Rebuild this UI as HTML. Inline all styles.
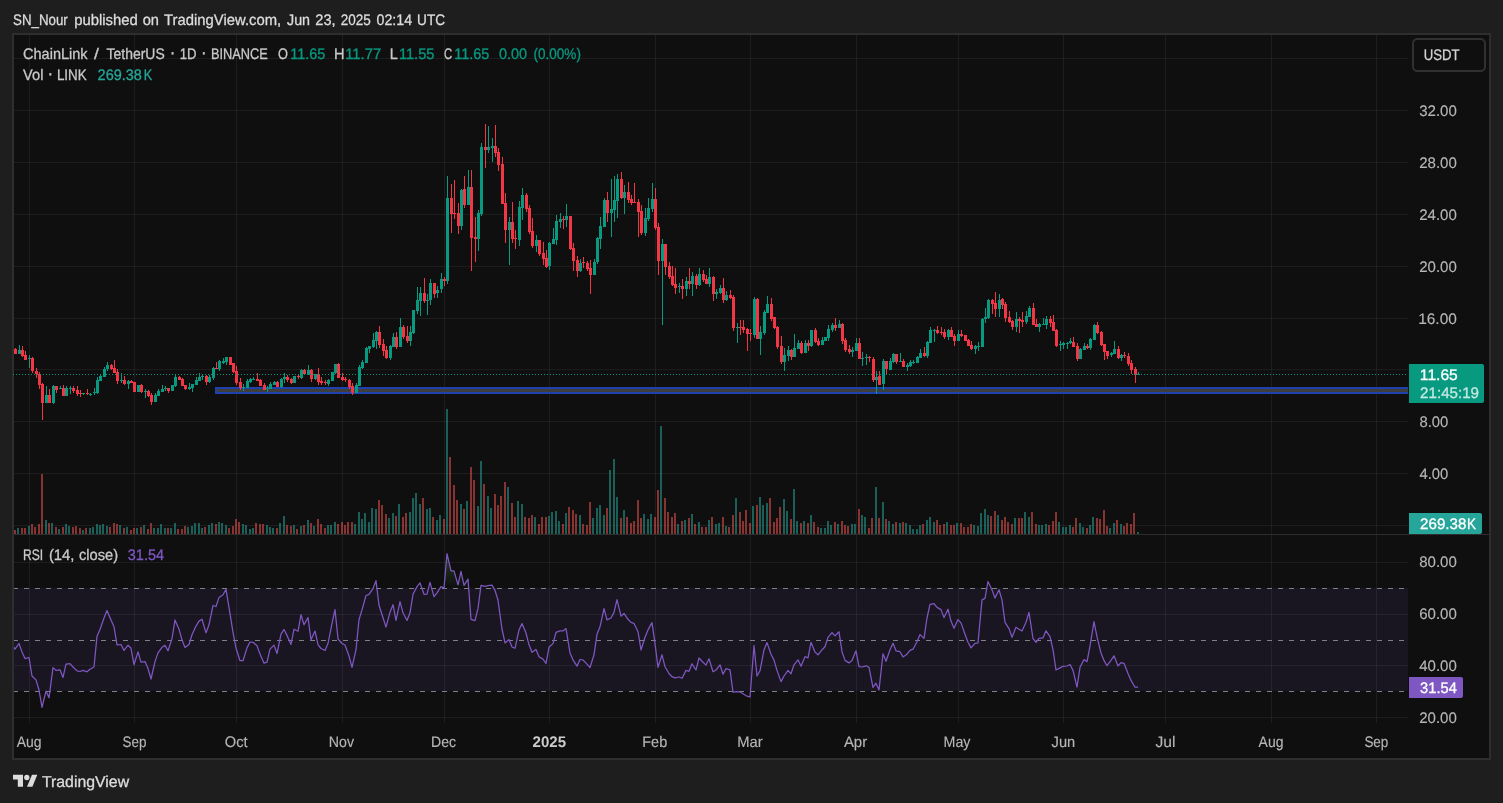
<!DOCTYPE html>
<html lang="en">
<head>
<meta charset="utf-8">
<title>LINKUSDT chart by SN_Nour</title>
<style>
html,body{margin:0;padding:0;background:#1e1e1e;overflow:hidden}
body{width:1503px;height:803px;font-family:"Liberation Sans","DejaVu Sans",sans-serif}
svg{display:block;will-change:transform}
text{font-family:"Liberation Sans","DejaVu Sans",sans-serif;font-size:15px;fill:#c9c9c9;text-rendering:geometricPrecision}
.hdr{font-size:15.5px;fill:#dcdcdc}
.ax{fill:#bdbdbd}
.lg{fill:#c9c9c9}
.gv{fill:#089981}
.vv{fill:#26a69a}
.pv{fill:#7e57c2}
.w{fill:#ffffff}
.grid{stroke:#ffffff;stroke-opacity:0.06;stroke-width:1;shape-rendering:crispEdges}
.crisp{shape-rendering:crispEdges}
</style>
</head>
<body>
<svg width="1503" height="803" viewBox="0 0 1503 803">
<rect x="0" y="0" width="1503" height="803" fill="#1e1e1e"/>
<!-- frame -->
<rect class="crisp" x="12" y="33" width="1479" height="727" fill="#2e2e2e"/>
<rect class="crisp" x="14" y="35" width="1475" height="723" fill="#0f0f0f"/>
<!-- RSI band -->
<rect class="crisp" x="14" y="588" width="1394" height="103" fill="#1a1621"/>
<!-- grid -->
<g class="grid">
<path d="M29.5 35V723M134.5 35V723M236.5 35V723M342.5 35V723M444.5 35V723M549.5 35V723M655.5 35V723M750.5 35V723M856.5 35V723M958.5 35V723M1063.5 35V723M1165.5 35V723M1271.5 35V723M1376.5 35V723"/>
<path d="M14 58.5H1408M14 110.5H1408M14 162.5H1408M14 214.5H1408M14 266.5H1408M14 318.5H1408M14 369.5H1408M14 421.5H1408M14 473.5H1408M14 525.5H1408"/>
<path d="M14 562.5H1408M14 614.5H1408M14 665.5H1408M14 717.5H1408"/>
</g>
<!-- volume -->
<g class="crisp" fill-opacity="0.53">
<rect x="14" y="530" width="2" height="4" fill="#ef5350"/>
<rect x="17" y="528" width="2" height="6" fill="#26a69a"/>
<rect x="21" y="528" width="2" height="6" fill="#ef5350"/>
<rect x="24" y="528" width="2" height="6" fill="#ef5350"/>
<rect x="28" y="526" width="2" height="8" fill="#26a69a"/>
<rect x="31" y="524" width="2" height="10" fill="#ef5350"/>
<rect x="34" y="527" width="2" height="7" fill="#ef5350"/>
<rect x="38" y="524" width="2" height="10" fill="#ef5350"/>
<rect x="41" y="474" width="2" height="60" fill="#ef5350"/>
<rect x="45" y="520" width="2" height="14" fill="#26a69a"/>
<rect x="48" y="523" width="2" height="11" fill="#ef5350"/>
<rect x="51" y="523" width="2" height="11" fill="#26a69a"/>
<rect x="55" y="527" width="2" height="7" fill="#ef5350"/>
<rect x="58" y="529" width="2" height="5" fill="#26a69a"/>
<rect x="62" y="527" width="2" height="7" fill="#ef5350"/>
<rect x="65" y="524" width="2" height="10" fill="#26a69a"/>
<rect x="68" y="526" width="2" height="8" fill="#26a69a"/>
<rect x="72" y="527" width="2" height="7" fill="#ef5350"/>
<rect x="75" y="526" width="2" height="8" fill="#ef5350"/>
<rect x="79" y="528" width="2" height="6" fill="#ef5350"/>
<rect x="82" y="530" width="2" height="4" fill="#26a69a"/>
<rect x="85" y="528" width="2" height="6" fill="#ef5350"/>
<rect x="89" y="528" width="2" height="6" fill="#26a69a"/>
<rect x="92" y="527" width="2" height="7" fill="#26a69a"/>
<rect x="96" y="524" width="2" height="10" fill="#26a69a"/>
<rect x="99" y="525" width="2" height="9" fill="#26a69a"/>
<rect x="102" y="524" width="2" height="10" fill="#26a69a"/>
<rect x="106" y="526" width="2" height="8" fill="#26a69a"/>
<rect x="109" y="527" width="2" height="7" fill="#ef5350"/>
<rect x="113" y="523" width="2" height="11" fill="#ef5350"/>
<rect x="116" y="524" width="2" height="10" fill="#ef5350"/>
<rect x="119" y="525" width="2" height="9" fill="#26a69a"/>
<rect x="123" y="528" width="2" height="6" fill="#ef5350"/>
<rect x="126" y="527" width="2" height="7" fill="#26a69a"/>
<rect x="130" y="530" width="2" height="4" fill="#ef5350"/>
<rect x="133" y="528" width="2" height="6" fill="#ef5350"/>
<rect x="136" y="528" width="2" height="6" fill="#26a69a"/>
<rect x="140" y="527" width="2" height="7" fill="#ef5350"/>
<rect x="143" y="525" width="2" height="9" fill="#26a69a"/>
<rect x="147" y="529" width="2" height="5" fill="#ef5350"/>
<rect x="150" y="523" width="2" height="11" fill="#ef5350"/>
<rect x="153" y="528" width="2" height="6" fill="#26a69a"/>
<rect x="157" y="528" width="2" height="6" fill="#26a69a"/>
<rect x="160" y="524" width="2" height="10" fill="#26a69a"/>
<rect x="164" y="528" width="2" height="6" fill="#26a69a"/>
<rect x="167" y="528" width="2" height="6" fill="#ef5350"/>
<rect x="170" y="528" width="2" height="6" fill="#26a69a"/>
<rect x="174" y="523" width="2" height="11" fill="#26a69a"/>
<rect x="177" y="529" width="2" height="5" fill="#ef5350"/>
<rect x="181" y="529" width="2" height="5" fill="#ef5350"/>
<rect x="184" y="526" width="2" height="8" fill="#ef5350"/>
<rect x="187" y="527" width="2" height="7" fill="#26a69a"/>
<rect x="191" y="526" width="2" height="8" fill="#26a69a"/>
<rect x="194" y="523" width="2" height="11" fill="#26a69a"/>
<rect x="198" y="523" width="2" height="11" fill="#26a69a"/>
<rect x="201" y="528" width="2" height="6" fill="#26a69a"/>
<rect x="204" y="527" width="2" height="7" fill="#ef5350"/>
<rect x="208" y="525" width="2" height="9" fill="#26a69a"/>
<rect x="211" y="523" width="2" height="11" fill="#26a69a"/>
<rect x="215" y="524" width="2" height="10" fill="#ef5350"/>
<rect x="218" y="522" width="2" height="12" fill="#26a69a"/>
<rect x="221" y="523" width="2" height="11" fill="#26a69a"/>
<rect x="225" y="525" width="2" height="9" fill="#26a69a"/>
<rect x="228" y="528" width="2" height="6" fill="#ef5350"/>
<rect x="232" y="526" width="2" height="8" fill="#ef5350"/>
<rect x="235" y="519" width="2" height="15" fill="#ef5350"/>
<rect x="238" y="522" width="2" height="12" fill="#ef5350"/>
<rect x="242" y="524" width="2" height="10" fill="#26a69a"/>
<rect x="245" y="525" width="2" height="9" fill="#26a69a"/>
<rect x="249" y="529" width="2" height="5" fill="#26a69a"/>
<rect x="252" y="528" width="2" height="6" fill="#26a69a"/>
<rect x="255" y="523" width="2" height="11" fill="#ef5350"/>
<rect x="259" y="524" width="2" height="10" fill="#ef5350"/>
<rect x="262" y="524" width="2" height="10" fill="#ef5350"/>
<rect x="266" y="525" width="2" height="9" fill="#26a69a"/>
<rect x="269" y="527" width="2" height="7" fill="#26a69a"/>
<rect x="272" y="528" width="2" height="6" fill="#26a69a"/>
<rect x="276" y="528" width="2" height="6" fill="#ef5350"/>
<rect x="279" y="523" width="2" height="11" fill="#26a69a"/>
<rect x="283" y="516" width="2" height="18" fill="#26a69a"/>
<rect x="286" y="525" width="2" height="9" fill="#ef5350"/>
<rect x="290" y="526" width="2" height="8" fill="#ef5350"/>
<rect x="293" y="525" width="2" height="9" fill="#26a69a"/>
<rect x="296" y="529" width="2" height="5" fill="#ef5350"/>
<rect x="300" y="526" width="2" height="8" fill="#26a69a"/>
<rect x="303" y="525" width="2" height="9" fill="#ef5350"/>
<rect x="307" y="520" width="2" height="14" fill="#26a69a"/>
<rect x="310" y="523" width="2" height="11" fill="#ef5350"/>
<rect x="313" y="526" width="2" height="8" fill="#26a69a"/>
<rect x="317" y="519" width="2" height="15" fill="#ef5350"/>
<rect x="320" y="524" width="2" height="10" fill="#ef5350"/>
<rect x="324" y="528" width="2" height="6" fill="#ef5350"/>
<rect x="327" y="525" width="2" height="9" fill="#26a69a"/>
<rect x="330" y="525" width="2" height="9" fill="#26a69a"/>
<rect x="334" y="522" width="2" height="12" fill="#26a69a"/>
<rect x="337" y="524" width="2" height="10" fill="#ef5350"/>
<rect x="341" y="522" width="2" height="12" fill="#ef5350"/>
<rect x="344" y="525" width="2" height="9" fill="#ef5350"/>
<rect x="347" y="522" width="2" height="12" fill="#ef5350"/>
<rect x="351" y="522" width="2" height="12" fill="#ef5350"/>
<rect x="354" y="524" width="2" height="10" fill="#26a69a"/>
<rect x="358" y="512" width="2" height="22" fill="#26a69a"/>
<rect x="361" y="519" width="2" height="15" fill="#26a69a"/>
<rect x="364" y="513" width="2" height="21" fill="#26a69a"/>
<rect x="368" y="522" width="2" height="12" fill="#26a69a"/>
<rect x="371" y="508" width="2" height="26" fill="#26a69a"/>
<rect x="375" y="509" width="2" height="25" fill="#26a69a"/>
<rect x="378" y="500" width="2" height="34" fill="#ef5350"/>
<rect x="381" y="505" width="2" height="29" fill="#ef5350"/>
<rect x="385" y="514" width="2" height="20" fill="#ef5350"/>
<rect x="388" y="518" width="2" height="16" fill="#26a69a"/>
<rect x="392" y="513" width="2" height="21" fill="#26a69a"/>
<rect x="395" y="516" width="2" height="18" fill="#ef5350"/>
<rect x="398" y="504" width="2" height="30" fill="#26a69a"/>
<rect x="402" y="517" width="2" height="17" fill="#ef5350"/>
<rect x="405" y="513" width="2" height="21" fill="#ef5350"/>
<rect x="409" y="512" width="2" height="22" fill="#26a69a"/>
<rect x="412" y="498" width="2" height="36" fill="#26a69a"/>
<rect x="415" y="493" width="2" height="41" fill="#26a69a"/>
<rect x="419" y="504" width="2" height="30" fill="#26a69a"/>
<rect x="422" y="498" width="2" height="36" fill="#ef5350"/>
<rect x="426" y="509" width="2" height="25" fill="#26a69a"/>
<rect x="429" y="508" width="2" height="26" fill="#26a69a"/>
<rect x="432" y="517" width="2" height="17" fill="#ef5350"/>
<rect x="436" y="520" width="2" height="14" fill="#26a69a"/>
<rect x="439" y="515" width="2" height="19" fill="#26a69a"/>
<rect x="443" y="519" width="2" height="15" fill="#ef5350"/>
<rect x="446" y="409" width="2" height="125" fill="#26a69a"/>
<rect x="449" y="457" width="2" height="77" fill="#ef5350"/>
<rect x="453" y="485" width="2" height="49" fill="#ef5350"/>
<rect x="456" y="500" width="2" height="34" fill="#ef5350"/>
<rect x="460" y="504" width="2" height="30" fill="#26a69a"/>
<rect x="463" y="509" width="2" height="25" fill="#ef5350"/>
<rect x="466" y="501" width="2" height="33" fill="#26a69a"/>
<rect x="470" y="467" width="2" height="67" fill="#ef5350"/>
<rect x="473" y="480" width="2" height="54" fill="#ef5350"/>
<rect x="477" y="506" width="2" height="28" fill="#26a69a"/>
<rect x="480" y="461" width="2" height="73" fill="#26a69a"/>
<rect x="483" y="484" width="2" height="50" fill="#ef5350"/>
<rect x="487" y="496" width="2" height="38" fill="#26a69a"/>
<rect x="490" y="508" width="2" height="26" fill="#26a69a"/>
<rect x="494" y="494" width="2" height="40" fill="#ef5350"/>
<rect x="497" y="505" width="2" height="29" fill="#ef5350"/>
<rect x="500" y="496" width="2" height="38" fill="#ef5350"/>
<rect x="504" y="482" width="2" height="52" fill="#ef5350"/>
<rect x="507" y="487" width="2" height="47" fill="#26a69a"/>
<rect x="511" y="503" width="2" height="31" fill="#ef5350"/>
<rect x="514" y="517" width="2" height="17" fill="#ef5350"/>
<rect x="517" y="501" width="2" height="33" fill="#26a69a"/>
<rect x="521" y="504" width="2" height="30" fill="#26a69a"/>
<rect x="524" y="517" width="2" height="17" fill="#ef5350"/>
<rect x="528" y="518" width="2" height="16" fill="#ef5350"/>
<rect x="531" y="515" width="2" height="19" fill="#ef5350"/>
<rect x="534" y="517" width="2" height="17" fill="#26a69a"/>
<rect x="538" y="524" width="2" height="10" fill="#ef5350"/>
<rect x="541" y="517" width="2" height="17" fill="#ef5350"/>
<rect x="545" y="517" width="2" height="17" fill="#ef5350"/>
<rect x="548" y="516" width="2" height="18" fill="#26a69a"/>
<rect x="551" y="512" width="2" height="22" fill="#26a69a"/>
<rect x="555" y="511" width="2" height="23" fill="#26a69a"/>
<rect x="558" y="521" width="2" height="13" fill="#26a69a"/>
<rect x="562" y="524" width="2" height="10" fill="#ef5350"/>
<rect x="565" y="513" width="2" height="21" fill="#26a69a"/>
<rect x="568" y="507" width="2" height="27" fill="#ef5350"/>
<rect x="572" y="510" width="2" height="24" fill="#ef5350"/>
<rect x="575" y="514" width="2" height="20" fill="#ef5350"/>
<rect x="579" y="515" width="2" height="19" fill="#26a69a"/>
<rect x="582" y="524" width="2" height="10" fill="#ef5350"/>
<rect x="586" y="525" width="2" height="9" fill="#ef5350"/>
<rect x="589" y="502" width="2" height="32" fill="#ef5350"/>
<rect x="592" y="518" width="2" height="16" fill="#26a69a"/>
<rect x="596" y="508" width="2" height="26" fill="#26a69a"/>
<rect x="599" y="505" width="2" height="29" fill="#26a69a"/>
<rect x="603" y="515" width="2" height="19" fill="#26a69a"/>
<rect x="606" y="508" width="2" height="26" fill="#ef5350"/>
<rect x="609" y="470" width="2" height="64" fill="#26a69a"/>
<rect x="613" y="459" width="2" height="75" fill="#26a69a"/>
<rect x="616" y="497" width="2" height="37" fill="#26a69a"/>
<rect x="620" y="518" width="2" height="16" fill="#ef5350"/>
<rect x="623" y="510" width="2" height="24" fill="#26a69a"/>
<rect x="626" y="517" width="2" height="17" fill="#ef5350"/>
<rect x="630" y="523" width="2" height="11" fill="#ef5350"/>
<rect x="633" y="521" width="2" height="13" fill="#ef5350"/>
<rect x="637" y="500" width="2" height="34" fill="#ef5350"/>
<rect x="640" y="518" width="2" height="16" fill="#ef5350"/>
<rect x="643" y="514" width="2" height="20" fill="#26a69a"/>
<rect x="647" y="519" width="2" height="15" fill="#26a69a"/>
<rect x="650" y="514" width="2" height="20" fill="#26a69a"/>
<rect x="654" y="517" width="2" height="17" fill="#ef5350"/>
<rect x="657" y="490" width="2" height="44" fill="#ef5350"/>
<rect x="660" y="426" width="2" height="108" fill="#26a69a"/>
<rect x="664" y="498" width="2" height="36" fill="#ef5350"/>
<rect x="667" y="512" width="2" height="22" fill="#ef5350"/>
<rect x="671" y="517" width="2" height="17" fill="#ef5350"/>
<rect x="674" y="513" width="2" height="21" fill="#ef5350"/>
<rect x="677" y="524" width="2" height="10" fill="#26a69a"/>
<rect x="681" y="521" width="2" height="13" fill="#ef5350"/>
<rect x="684" y="520" width="2" height="14" fill="#26a69a"/>
<rect x="688" y="518" width="2" height="16" fill="#ef5350"/>
<rect x="691" y="514" width="2" height="20" fill="#26a69a"/>
<rect x="694" y="524" width="2" height="10" fill="#ef5350"/>
<rect x="698" y="522" width="2" height="12" fill="#26a69a"/>
<rect x="701" y="527" width="2" height="7" fill="#ef5350"/>
<rect x="705" y="527" width="2" height="7" fill="#ef5350"/>
<rect x="708" y="520" width="2" height="14" fill="#26a69a"/>
<rect x="711" y="517" width="2" height="17" fill="#ef5350"/>
<rect x="715" y="524" width="2" height="10" fill="#26a69a"/>
<rect x="718" y="523" width="2" height="11" fill="#26a69a"/>
<rect x="722" y="517" width="2" height="17" fill="#ef5350"/>
<rect x="725" y="526" width="2" height="8" fill="#26a69a"/>
<rect x="728" y="527" width="2" height="7" fill="#ef5350"/>
<rect x="732" y="515" width="2" height="19" fill="#ef5350"/>
<rect x="735" y="498" width="2" height="36" fill="#26a69a"/>
<rect x="739" y="512" width="2" height="22" fill="#ef5350"/>
<rect x="742" y="521" width="2" height="13" fill="#ef5350"/>
<rect x="745" y="510" width="2" height="24" fill="#ef5350"/>
<rect x="749" y="523" width="2" height="11" fill="#ef5350"/>
<rect x="752" y="506" width="2" height="28" fill="#26a69a"/>
<rect x="756" y="505" width="2" height="29" fill="#ef5350"/>
<rect x="759" y="497" width="2" height="37" fill="#26a69a"/>
<rect x="762" y="505" width="2" height="29" fill="#26a69a"/>
<rect x="766" y="503" width="2" height="31" fill="#26a69a"/>
<rect x="769" y="498" width="2" height="36" fill="#ef5350"/>
<rect x="773" y="522" width="2" height="12" fill="#ef5350"/>
<rect x="776" y="518" width="2" height="16" fill="#ef5350"/>
<rect x="779" y="507" width="2" height="27" fill="#ef5350"/>
<rect x="783" y="499" width="2" height="35" fill="#26a69a"/>
<rect x="786" y="511" width="2" height="23" fill="#26a69a"/>
<rect x="790" y="519" width="2" height="15" fill="#ef5350"/>
<rect x="793" y="489" width="2" height="45" fill="#26a69a"/>
<rect x="796" y="521" width="2" height="13" fill="#26a69a"/>
<rect x="800" y="523" width="2" height="11" fill="#ef5350"/>
<rect x="803" y="521" width="2" height="13" fill="#26a69a"/>
<rect x="807" y="523" width="2" height="11" fill="#ef5350"/>
<rect x="810" y="515" width="2" height="19" fill="#26a69a"/>
<rect x="813" y="522" width="2" height="12" fill="#ef5350"/>
<rect x="817" y="527" width="2" height="7" fill="#ef5350"/>
<rect x="820" y="528" width="2" height="6" fill="#26a69a"/>
<rect x="824" y="528" width="2" height="6" fill="#26a69a"/>
<rect x="827" y="521" width="2" height="13" fill="#26a69a"/>
<rect x="830" y="525" width="2" height="9" fill="#26a69a"/>
<rect x="834" y="522" width="2" height="12" fill="#ef5350"/>
<rect x="837" y="524" width="2" height="10" fill="#26a69a"/>
<rect x="841" y="521" width="2" height="13" fill="#ef5350"/>
<rect x="844" y="525" width="2" height="9" fill="#ef5350"/>
<rect x="847" y="526" width="2" height="8" fill="#ef5350"/>
<rect x="851" y="524" width="2" height="10" fill="#26a69a"/>
<rect x="854" y="524" width="2" height="10" fill="#26a69a"/>
<rect x="858" y="509" width="2" height="25" fill="#ef5350"/>
<rect x="861" y="515" width="2" height="19" fill="#26a69a"/>
<rect x="864" y="517" width="2" height="17" fill="#26a69a"/>
<rect x="868" y="528" width="2" height="6" fill="#ef5350"/>
<rect x="871" y="518" width="2" height="16" fill="#ef5350"/>
<rect x="875" y="487" width="2" height="47" fill="#26a69a"/>
<rect x="878" y="518" width="2" height="16" fill="#ef5350"/>
<rect x="882" y="502" width="2" height="32" fill="#26a69a"/>
<rect x="885" y="519" width="2" height="15" fill="#ef5350"/>
<rect x="888" y="521" width="2" height="13" fill="#26a69a"/>
<rect x="892" y="524" width="2" height="10" fill="#26a69a"/>
<rect x="895" y="522" width="2" height="12" fill="#ef5350"/>
<rect x="899" y="523" width="2" height="11" fill="#26a69a"/>
<rect x="902" y="522" width="2" height="12" fill="#ef5350"/>
<rect x="905" y="523" width="2" height="11" fill="#26a69a"/>
<rect x="909" y="525" width="2" height="9" fill="#26a69a"/>
<rect x="912" y="529" width="2" height="5" fill="#26a69a"/>
<rect x="916" y="529" width="2" height="5" fill="#26a69a"/>
<rect x="919" y="525" width="2" height="9" fill="#26a69a"/>
<rect x="922" y="524" width="2" height="10" fill="#ef5350"/>
<rect x="926" y="520" width="2" height="14" fill="#26a69a"/>
<rect x="929" y="517" width="2" height="17" fill="#26a69a"/>
<rect x="933" y="522" width="2" height="12" fill="#26a69a"/>
<rect x="936" y="520" width="2" height="14" fill="#ef5350"/>
<rect x="939" y="525" width="2" height="9" fill="#ef5350"/>
<rect x="943" y="524" width="2" height="10" fill="#ef5350"/>
<rect x="946" y="522" width="2" height="12" fill="#26a69a"/>
<rect x="950" y="525" width="2" height="9" fill="#ef5350"/>
<rect x="953" y="525" width="2" height="9" fill="#ef5350"/>
<rect x="956" y="523" width="2" height="11" fill="#26a69a"/>
<rect x="960" y="523" width="2" height="11" fill="#ef5350"/>
<rect x="963" y="527" width="2" height="7" fill="#ef5350"/>
<rect x="967" y="527" width="2" height="7" fill="#ef5350"/>
<rect x="970" y="524" width="2" height="10" fill="#ef5350"/>
<rect x="973" y="525" width="2" height="9" fill="#26a69a"/>
<rect x="977" y="526" width="2" height="8" fill="#26a69a"/>
<rect x="980" y="513" width="2" height="21" fill="#26a69a"/>
<rect x="984" y="509" width="2" height="25" fill="#26a69a"/>
<rect x="987" y="515" width="2" height="19" fill="#26a69a"/>
<rect x="990" y="516" width="2" height="18" fill="#ef5350"/>
<rect x="994" y="511" width="2" height="23" fill="#ef5350"/>
<rect x="997" y="515" width="2" height="19" fill="#26a69a"/>
<rect x="1001" y="520" width="2" height="14" fill="#ef5350"/>
<rect x="1004" y="517" width="2" height="17" fill="#ef5350"/>
<rect x="1007" y="522" width="2" height="12" fill="#ef5350"/>
<rect x="1011" y="524" width="2" height="10" fill="#ef5350"/>
<rect x="1014" y="518" width="2" height="16" fill="#26a69a"/>
<rect x="1018" y="518" width="2" height="16" fill="#ef5350"/>
<rect x="1021" y="518" width="2" height="16" fill="#ef5350"/>
<rect x="1024" y="512" width="2" height="22" fill="#26a69a"/>
<rect x="1028" y="517" width="2" height="17" fill="#26a69a"/>
<rect x="1031" y="512" width="2" height="22" fill="#ef5350"/>
<rect x="1035" y="524" width="2" height="10" fill="#ef5350"/>
<rect x="1038" y="525" width="2" height="9" fill="#26a69a"/>
<rect x="1041" y="525" width="2" height="9" fill="#26a69a"/>
<rect x="1045" y="524" width="2" height="10" fill="#26a69a"/>
<rect x="1048" y="525" width="2" height="9" fill="#ef5350"/>
<rect x="1052" y="521" width="2" height="13" fill="#ef5350"/>
<rect x="1055" y="512" width="2" height="22" fill="#ef5350"/>
<rect x="1058" y="522" width="2" height="12" fill="#26a69a"/>
<rect x="1062" y="527" width="2" height="7" fill="#26a69a"/>
<rect x="1065" y="527" width="2" height="7" fill="#26a69a"/>
<rect x="1069" y="525" width="2" height="9" fill="#26a69a"/>
<rect x="1072" y="527" width="2" height="7" fill="#ef5350"/>
<rect x="1075" y="518" width="2" height="16" fill="#ef5350"/>
<rect x="1079" y="523" width="2" height="11" fill="#26a69a"/>
<rect x="1082" y="527" width="2" height="7" fill="#26a69a"/>
<rect x="1086" y="528" width="2" height="6" fill="#ef5350"/>
<rect x="1089" y="525" width="2" height="9" fill="#26a69a"/>
<rect x="1092" y="517" width="2" height="17" fill="#26a69a"/>
<rect x="1096" y="518" width="2" height="16" fill="#ef5350"/>
<rect x="1099" y="519" width="2" height="15" fill="#ef5350"/>
<rect x="1103" y="510" width="2" height="24" fill="#ef5350"/>
<rect x="1106" y="526" width="2" height="8" fill="#ef5350"/>
<rect x="1109" y="528" width="2" height="6" fill="#26a69a"/>
<rect x="1113" y="523" width="2" height="11" fill="#26a69a"/>
<rect x="1116" y="520" width="2" height="14" fill="#ef5350"/>
<rect x="1120" y="524" width="2" height="10" fill="#26a69a"/>
<rect x="1123" y="526" width="2" height="8" fill="#ef5350"/>
<rect x="1126" y="523" width="2" height="11" fill="#ef5350"/>
<rect x="1130" y="524" width="2" height="10" fill="#ef5350"/>
<rect x="1133" y="513" width="2" height="21" fill="#ef5350"/>
<rect x="1137" y="532" width="2" height="2" fill="#26a69a"/>
</g>
<!-- support zone rectangle -->
<rect class="crisp" x="215" y="387" width="1193" height="7" fill="#1f40af"/>
<rect class="crisp" x="217" y="389" width="1191" height="3" fill="#3e3e3d"/>
<!-- candles -->
<g class="crisp">
<rect x="15" y="347.8" width="1" height="6.2" fill="#f23645"/>
<rect x="14" y="349.0" width="3" height="5.0" fill="#f23645"/>
<rect x="19" y="345.0" width="1" height="9.0" fill="#089981"/>
<rect x="18" y="350.0" width="3" height="4.0" fill="#089981"/>
<rect x="22" y="346.0" width="1" height="11.0" fill="#f23645"/>
<rect x="21" y="350.0" width="3" height="6.0" fill="#f23645"/>
<rect x="25" y="351.0" width="1" height="9.0" fill="#f23645"/>
<rect x="24" y="355.0" width="3" height="5.0" fill="#f23645"/>
<rect x="29" y="355.0" width="1" height="13.0" fill="#089981"/>
<rect x="28" y="358.0" width="3" height="1.0" fill="#089981"/>
<rect x="32" y="357.0" width="1" height="16.0" fill="#f23645"/>
<rect x="31" y="357.8" width="3" height="13.2" fill="#f23645"/>
<rect x="36" y="367.9" width="1" height="10.0" fill="#f23645"/>
<rect x="35" y="371.1" width="3" height="3.3" fill="#f23645"/>
<rect x="39" y="371.9" width="1" height="17.0" fill="#f23645"/>
<rect x="38" y="374.1" width="3" height="10.8" fill="#f23645"/>
<rect x="42" y="382.9" width="1" height="37.1" fill="#f23645"/>
<rect x="41" y="383.9" width="3" height="19.0" fill="#f23645"/>
<rect x="46" y="385.9" width="1" height="17.0" fill="#089981"/>
<rect x="45" y="394.9" width="3" height="8.0" fill="#089981"/>
<rect x="49" y="388.9" width="1" height="14.0" fill="#f23645"/>
<rect x="48" y="394.9" width="3" height="8.0" fill="#f23645"/>
<rect x="53" y="384.9" width="1" height="19.0" fill="#089981"/>
<rect x="52" y="385.9" width="3" height="17.0" fill="#089981"/>
<rect x="56" y="386.1" width="1" height="6.8" fill="#f23645"/>
<rect x="55" y="386.1" width="3" height="3.8" fill="#f23645"/>
<rect x="60" y="385.9" width="1" height="3.5" fill="#089981"/>
<rect x="59" y="387.9" width="3" height="1.0" fill="#089981"/>
<rect x="63" y="384.9" width="1" height="11.0" fill="#f23645"/>
<rect x="62" y="387.9" width="3" height="8.0" fill="#f23645"/>
<rect x="66" y="385.9" width="1" height="10.0" fill="#089981"/>
<rect x="65" y="387.9" width="3" height="8.0" fill="#089981"/>
<rect x="70" y="385.9" width="1" height="8.0" fill="#089981"/>
<rect x="69" y="387.9" width="3" height="1.0" fill="#089981"/>
<rect x="73" y="385.9" width="1" height="7.0" fill="#f23645"/>
<rect x="72" y="387.9" width="3" height="3.0" fill="#f23645"/>
<rect x="77" y="385.9" width="1" height="10.0" fill="#f23645"/>
<rect x="76" y="389.9" width="3" height="4.0" fill="#f23645"/>
<rect x="80" y="389.9" width="1" height="7.0" fill="#f23645"/>
<rect x="79" y="392.9" width="3" height="1.0" fill="#f23645"/>
<rect x="83" y="392.9" width="1" height="2.0" fill="#089981"/>
<rect x="82" y="393.1" width="3" height="1.0" fill="#089981"/>
<rect x="87" y="388.9" width="1" height="6.0" fill="#f23645"/>
<rect x="86" y="392.9" width="3" height="1.0" fill="#f23645"/>
<rect x="90" y="393.4" width="1" height="2.5" fill="#089981"/>
<rect x="89" y="393.7" width="3" height="1.0" fill="#089981"/>
<rect x="94" y="387.9" width="1" height="7.0" fill="#089981"/>
<rect x="93" y="391.9" width="3" height="1.0" fill="#089981"/>
<rect x="97" y="376.9" width="1" height="17.0" fill="#089981"/>
<rect x="96" y="380.4" width="3" height="12.5" fill="#089981"/>
<rect x="100" y="374.1" width="1" height="6.8" fill="#089981"/>
<rect x="99" y="375.9" width="3" height="5.0" fill="#089981"/>
<rect x="104" y="366.9" width="1" height="10.0" fill="#089981"/>
<rect x="103" y="368.9" width="3" height="8.0" fill="#089981"/>
<rect x="107" y="361.9" width="1" height="9.0" fill="#089981"/>
<rect x="106" y="364.9" width="3" height="4.5" fill="#089981"/>
<rect x="111" y="363.9" width="1" height="6.0" fill="#f23645"/>
<rect x="110" y="364.7" width="3" height="4.2" fill="#f23645"/>
<rect x="114" y="360.0" width="1" height="13.0" fill="#f23645"/>
<rect x="113" y="367.9" width="3" height="5.0" fill="#f23645"/>
<rect x="117" y="368.9" width="1" height="15.0" fill="#f23645"/>
<rect x="116" y="371.9" width="3" height="9.0" fill="#f23645"/>
<rect x="121" y="372.9" width="1" height="10.0" fill="#089981"/>
<rect x="120" y="380.1" width="3" height="1.0" fill="#089981"/>
<rect x="124" y="375.9" width="1" height="9.0" fill="#f23645"/>
<rect x="123" y="380.4" width="3" height="3.5" fill="#f23645"/>
<rect x="128" y="379.9" width="1" height="9.0" fill="#089981"/>
<rect x="127" y="380.9" width="3" height="3.0" fill="#089981"/>
<rect x="131" y="380.1" width="1" height="2.8" fill="#f23645"/>
<rect x="130" y="380.9" width="3" height="2.0" fill="#f23645"/>
<rect x="134" y="381.9" width="1" height="10.0" fill="#f23645"/>
<rect x="133" y="382.1" width="3" height="9.8" fill="#f23645"/>
<rect x="138" y="384.9" width="1" height="7.0" fill="#089981"/>
<rect x="137" y="384.9" width="3" height="7.0" fill="#089981"/>
<rect x="141" y="383.9" width="1" height="9.0" fill="#f23645"/>
<rect x="140" y="384.9" width="3" height="7.0" fill="#f23645"/>
<rect x="145" y="388.9" width="1" height="9.0" fill="#089981"/>
<rect x="144" y="391.1" width="3" height="1.0" fill="#089981"/>
<rect x="148" y="389.9" width="1" height="7.0" fill="#f23645"/>
<rect x="147" y="390.9" width="3" height="5.0" fill="#f23645"/>
<rect x="151" y="392.9" width="1" height="12.0" fill="#f23645"/>
<rect x="150" y="394.9" width="3" height="7.0" fill="#f23645"/>
<rect x="155" y="392.9" width="1" height="9.0" fill="#089981"/>
<rect x="154" y="394.9" width="3" height="7.0" fill="#089981"/>
<rect x="158" y="388.9" width="1" height="7.0" fill="#089981"/>
<rect x="157" y="390.9" width="3" height="5.0" fill="#089981"/>
<rect x="162" y="384.9" width="1" height="7.0" fill="#089981"/>
<rect x="161" y="388.9" width="3" height="3.0" fill="#089981"/>
<rect x="165" y="385.9" width="1" height="5.0" fill="#089981"/>
<rect x="164" y="388.4" width="3" height="1.0" fill="#089981"/>
<rect x="168" y="387.9" width="1" height="5.0" fill="#f23645"/>
<rect x="167" y="388.1" width="3" height="3.3" fill="#f23645"/>
<rect x="172" y="384.9" width="1" height="6.0" fill="#089981"/>
<rect x="171" y="384.9" width="3" height="6.0" fill="#089981"/>
<rect x="175" y="374.1" width="1" height="12.8" fill="#089981"/>
<rect x="174" y="376.9" width="3" height="9.0" fill="#089981"/>
<rect x="179" y="375.9" width="1" height="4.0" fill="#f23645"/>
<rect x="178" y="376.7" width="3" height="3.2" fill="#f23645"/>
<rect x="182" y="377.9" width="1" height="8.0" fill="#f23645"/>
<rect x="181" y="378.9" width="3" height="7.0" fill="#f23645"/>
<rect x="185" y="384.9" width="1" height="5.0" fill="#f23645"/>
<rect x="184" y="385.4" width="3" height="3.5" fill="#f23645"/>
<rect x="189" y="382.9" width="1" height="7.0" fill="#089981"/>
<rect x="188" y="386.9" width="3" height="2.5" fill="#089981"/>
<rect x="192" y="383.9" width="1" height="8.0" fill="#089981"/>
<rect x="191" y="384.1" width="3" height="3.8" fill="#089981"/>
<rect x="196" y="376.9" width="1" height="8.0" fill="#089981"/>
<rect x="195" y="379.9" width="3" height="5.0" fill="#089981"/>
<rect x="199" y="372.9" width="1" height="8.0" fill="#089981"/>
<rect x="198" y="377.1" width="3" height="3.6" fill="#089981"/>
<rect x="202" y="374.1" width="1" height="5.8" fill="#089981"/>
<rect x="201" y="375.9" width="3" height="1.0" fill="#089981"/>
<rect x="206" y="374.9" width="1" height="10.0" fill="#f23645"/>
<rect x="205" y="375.7" width="3" height="6.7" fill="#f23645"/>
<rect x="209" y="374.9" width="1" height="8.0" fill="#089981"/>
<rect x="208" y="376.9" width="3" height="5.0" fill="#089981"/>
<rect x="213" y="366.9" width="1" height="13.0" fill="#089981"/>
<rect x="212" y="367.9" width="3" height="10.0" fill="#089981"/>
<rect x="216" y="361.9" width="1" height="7.0" fill="#f23645"/>
<rect x="215" y="367.9" width="3" height="1.0" fill="#f23645"/>
<rect x="219" y="360.0" width="1" height="11.0" fill="#089981"/>
<rect x="218" y="361.4" width="3" height="7.5" fill="#089981"/>
<rect x="223" y="358.0" width="1" height="6.0" fill="#089981"/>
<rect x="222" y="361.1" width="3" height="1.8" fill="#089981"/>
<rect x="226" y="357.0" width="1" height="8.0" fill="#089981"/>
<rect x="225" y="357.2" width="3" height="4.6" fill="#089981"/>
<rect x="230" y="357.0" width="1" height="8.0" fill="#f23645"/>
<rect x="229" y="357.2" width="3" height="7.6" fill="#f23645"/>
<rect x="233" y="362.9" width="1" height="10.0" fill="#f23645"/>
<rect x="232" y="363.1" width="3" height="8.8" fill="#f23645"/>
<rect x="236" y="365.9" width="1" height="19.0" fill="#f23645"/>
<rect x="235" y="371.4" width="3" height="11.5" fill="#f23645"/>
<rect x="240" y="377.9" width="1" height="12.0" fill="#f23645"/>
<rect x="239" y="382.4" width="3" height="5.5" fill="#f23645"/>
<rect x="243" y="383.9" width="1" height="7.0" fill="#089981"/>
<rect x="242" y="386.9" width="3" height="1.0" fill="#089981"/>
<rect x="247" y="378.9" width="1" height="9.0" fill="#089981"/>
<rect x="246" y="380.9" width="3" height="7.0" fill="#089981"/>
<rect x="250" y="378.4" width="1" height="4.5" fill="#089981"/>
<rect x="249" y="378.9" width="3" height="3.0" fill="#089981"/>
<rect x="253" y="376.9" width="1" height="3.0" fill="#089981"/>
<rect x="252" y="378.7" width="3" height="1.0" fill="#089981"/>
<rect x="257" y="372.9" width="1" height="8.0" fill="#f23645"/>
<rect x="256" y="378.9" width="3" height="2.0" fill="#f23645"/>
<rect x="260" y="378.9" width="1" height="7.0" fill="#f23645"/>
<rect x="259" y="380.1" width="3" height="5.8" fill="#f23645"/>
<rect x="264" y="382.9" width="1" height="7.0" fill="#f23645"/>
<rect x="263" y="384.9" width="3" height="5.0" fill="#f23645"/>
<rect x="267" y="385.9" width="1" height="6.0" fill="#089981"/>
<rect x="266" y="388.4" width="3" height="1.0" fill="#089981"/>
<rect x="270" y="381.9" width="1" height="7.0" fill="#089981"/>
<rect x="269" y="383.9" width="3" height="5.0" fill="#089981"/>
<rect x="274" y="380.9" width="1" height="4.0" fill="#089981"/>
<rect x="273" y="381.9" width="3" height="3.0" fill="#089981"/>
<rect x="277" y="380.9" width="1" height="6.0" fill="#f23645"/>
<rect x="276" y="382.4" width="3" height="4.5" fill="#f23645"/>
<rect x="281" y="377.9" width="1" height="10.0" fill="#089981"/>
<rect x="280" y="378.9" width="3" height="8.0" fill="#089981"/>
<rect x="284" y="372.9" width="1" height="10.0" fill="#089981"/>
<rect x="283" y="376.9" width="3" height="2.5" fill="#089981"/>
<rect x="287" y="374.9" width="1" height="7.0" fill="#f23645"/>
<rect x="286" y="376.9" width="3" height="3.0" fill="#f23645"/>
<rect x="291" y="377.9" width="1" height="6.0" fill="#f23645"/>
<rect x="290" y="378.9" width="3" height="4.0" fill="#f23645"/>
<rect x="294" y="375.9" width="1" height="7.0" fill="#089981"/>
<rect x="293" y="376.1" width="3" height="6.8" fill="#089981"/>
<rect x="298" y="374.9" width="1" height="4.0" fill="#f23645"/>
<rect x="297" y="376.4" width="3" height="1.0" fill="#f23645"/>
<rect x="301" y="368.9" width="1" height="10.0" fill="#089981"/>
<rect x="300" y="369.9" width="3" height="8.0" fill="#089981"/>
<rect x="304" y="368.9" width="1" height="6.0" fill="#f23645"/>
<rect x="303" y="369.9" width="3" height="4.0" fill="#f23645"/>
<rect x="308" y="364.9" width="1" height="10.0" fill="#089981"/>
<rect x="307" y="369.9" width="3" height="5.0" fill="#089981"/>
<rect x="311" y="368.9" width="1" height="13.0" fill="#f23645"/>
<rect x="310" y="369.9" width="3" height="9.0" fill="#f23645"/>
<rect x="315" y="373.9" width="1" height="6.0" fill="#089981"/>
<rect x="314" y="374.1" width="3" height="4.8" fill="#089981"/>
<rect x="318" y="367.9" width="1" height="17.0" fill="#f23645"/>
<rect x="317" y="374.4" width="3" height="7.5" fill="#f23645"/>
<rect x="321" y="376.9" width="1" height="8.0" fill="#f23645"/>
<rect x="320" y="380.9" width="3" height="2.0" fill="#f23645"/>
<rect x="325" y="379.9" width="1" height="5.0" fill="#f23645"/>
<rect x="324" y="382.4" width="3" height="1.0" fill="#f23645"/>
<rect x="328" y="378.9" width="1" height="7.0" fill="#089981"/>
<rect x="327" y="379.9" width="3" height="4.0" fill="#089981"/>
<rect x="332" y="371.9" width="1" height="9.0" fill="#089981"/>
<rect x="331" y="372.1" width="3" height="8.8" fill="#089981"/>
<rect x="335" y="363.9" width="1" height="10.0" fill="#089981"/>
<rect x="334" y="364.1" width="3" height="8.8" fill="#089981"/>
<rect x="338" y="362.9" width="1" height="15.0" fill="#f23645"/>
<rect x="337" y="363.9" width="3" height="14.0" fill="#f23645"/>
<rect x="342" y="372.9" width="1" height="8.0" fill="#f23645"/>
<rect x="341" y="376.9" width="3" height="3.0" fill="#f23645"/>
<rect x="345" y="376.9" width="1" height="5.0" fill="#f23645"/>
<rect x="344" y="379.1" width="3" height="1.0" fill="#f23645"/>
<rect x="349" y="378.9" width="1" height="10.0" fill="#f23645"/>
<rect x="348" y="379.7" width="3" height="7.2" fill="#f23645"/>
<rect x="352" y="382.9" width="1" height="12.0" fill="#f23645"/>
<rect x="351" y="386.4" width="3" height="6.5" fill="#f23645"/>
<rect x="356" y="382.9" width="1" height="10.0" fill="#089981"/>
<rect x="355" y="384.9" width="3" height="8.0" fill="#089981"/>
<rect x="359" y="364.9" width="1" height="21.0" fill="#089981"/>
<rect x="358" y="366.9" width="3" height="19.0" fill="#089981"/>
<rect x="362" y="359.9" width="1" height="9.0" fill="#089981"/>
<rect x="361" y="361.9" width="3" height="6.5" fill="#089981"/>
<rect x="366" y="346.9" width="1" height="16.0" fill="#089981"/>
<rect x="365" y="347.9" width="3" height="15.0" fill="#089981"/>
<rect x="369" y="345.9" width="1" height="7.0" fill="#089981"/>
<rect x="368" y="346.1" width="3" height="2.8" fill="#089981"/>
<rect x="373" y="333.0" width="1" height="15.0" fill="#089981"/>
<rect x="372" y="340.0" width="3" height="7.0" fill="#089981"/>
<rect x="376" y="331.0" width="1" height="18.0" fill="#089981"/>
<rect x="375" y="332.0" width="3" height="9.0" fill="#089981"/>
<rect x="379" y="326.0" width="1" height="22.0" fill="#f23645"/>
<rect x="378" y="332.0" width="3" height="13.0" fill="#f23645"/>
<rect x="383" y="339.0" width="1" height="17.0" fill="#f23645"/>
<rect x="382" y="344.0" width="3" height="7.0" fill="#f23645"/>
<rect x="386" y="345.9" width="1" height="13.0" fill="#f23645"/>
<rect x="385" y="349.9" width="3" height="8.0" fill="#f23645"/>
<rect x="390" y="345.0" width="1" height="15.0" fill="#089981"/>
<rect x="389" y="345.9" width="3" height="12.0" fill="#089981"/>
<rect x="393" y="333.0" width="1" height="14.0" fill="#089981"/>
<rect x="392" y="337.0" width="3" height="10.0" fill="#089981"/>
<rect x="396" y="332.0" width="1" height="17.0" fill="#f23645"/>
<rect x="395" y="337.0" width="3" height="10.0" fill="#f23645"/>
<rect x="400" y="318.2" width="1" height="28.3" fill="#089981"/>
<rect x="399" y="327.1" width="3" height="19.4" fill="#089981"/>
<rect x="403" y="324.9" width="1" height="14.2" fill="#f23645"/>
<rect x="402" y="327.1" width="3" height="9.7" fill="#f23645"/>
<rect x="407" y="326.4" width="1" height="16.4" fill="#f23645"/>
<rect x="406" y="336.1" width="3" height="5.2" fill="#f23645"/>
<rect x="410" y="326.4" width="1" height="19.4" fill="#089981"/>
<rect x="409" y="332.3" width="3" height="8.3" fill="#089981"/>
<rect x="413" y="309.9" width="1" height="23.9" fill="#089981"/>
<rect x="412" y="309.9" width="3" height="23.2" fill="#089981"/>
<rect x="417" y="286.8" width="1" height="26.9" fill="#089981"/>
<rect x="416" y="300.2" width="3" height="10.5" fill="#089981"/>
<rect x="420" y="287.1" width="1" height="28.8" fill="#089981"/>
<rect x="419" y="293.0" width="3" height="8.0" fill="#089981"/>
<rect x="424" y="278.1" width="1" height="24.8" fill="#f23645"/>
<rect x="423" y="293.0" width="3" height="8.0" fill="#f23645"/>
<rect x="427" y="294.2" width="1" height="21.0" fill="#089981"/>
<rect x="426" y="299.9" width="3" height="1.0" fill="#089981"/>
<rect x="430" y="279.0" width="1" height="25.7" fill="#089981"/>
<rect x="429" y="283.0" width="3" height="17.2" fill="#089981"/>
<rect x="434" y="283.0" width="1" height="15.0" fill="#f23645"/>
<rect x="433" y="283.0" width="3" height="10.9" fill="#f23645"/>
<rect x="437" y="286.0" width="1" height="12.0" fill="#089981"/>
<rect x="436" y="289.5" width="3" height="3.3" fill="#089981"/>
<rect x="441" y="273.3" width="1" height="19.5" fill="#089981"/>
<rect x="440" y="279.0" width="3" height="10.0" fill="#089981"/>
<rect x="444" y="277.0" width="1" height="9.0" fill="#f23645"/>
<rect x="443" y="278.7" width="3" height="2.1" fill="#f23645"/>
<rect x="447" y="175.9" width="1" height="108.0" fill="#089981"/>
<rect x="446" y="198.0" width="3" height="82.9" fill="#089981"/>
<rect x="451" y="183.9" width="1" height="49.0" fill="#f23645"/>
<rect x="450" y="198.0" width="3" height="16.0" fill="#f23645"/>
<rect x="454" y="179.9" width="1" height="39.0" fill="#f23645"/>
<rect x="453" y="213.2" width="3" height="1.0" fill="#f23645"/>
<rect x="458" y="203.0" width="1" height="30.9" fill="#f23645"/>
<rect x="457" y="213.0" width="3" height="12.9" fill="#f23645"/>
<rect x="461" y="188.9" width="1" height="41.0" fill="#089981"/>
<rect x="460" y="189.9" width="3" height="36.0" fill="#089981"/>
<rect x="464" y="175.9" width="1" height="32.1" fill="#f23645"/>
<rect x="463" y="188.9" width="3" height="16.1" fill="#f23645"/>
<rect x="468" y="169.9" width="1" height="35.1" fill="#089981"/>
<rect x="467" y="186.9" width="3" height="18.1" fill="#089981"/>
<rect x="471" y="169.9" width="1" height="101.1" fill="#f23645"/>
<rect x="470" y="186.9" width="3" height="51.0" fill="#f23645"/>
<rect x="475" y="216.9" width="1" height="45.1" fill="#f23645"/>
<rect x="474" y="237.4" width="3" height="1.5" fill="#f23645"/>
<rect x="478" y="210.0" width="1" height="40.9" fill="#089981"/>
<rect x="477" y="213.0" width="3" height="25.9" fill="#089981"/>
<rect x="481" y="143.0" width="1" height="73.0" fill="#089981"/>
<rect x="480" y="147.0" width="3" height="67.0" fill="#089981"/>
<rect x="485" y="124.0" width="1" height="43.9" fill="#f23645"/>
<rect x="484" y="147.0" width="3" height="3.0" fill="#f23645"/>
<rect x="488" y="126.0" width="1" height="26.9" fill="#089981"/>
<rect x="487" y="147.1" width="3" height="2.9" fill="#089981"/>
<rect x="492" y="138.0" width="1" height="23.9" fill="#089981"/>
<rect x="491" y="146.1" width="3" height="1.9" fill="#089981"/>
<rect x="495" y="125.0" width="1" height="31.9" fill="#f23645"/>
<rect x="494" y="146.1" width="3" height="6.8" fill="#f23645"/>
<rect x="498" y="148.0" width="1" height="22.9" fill="#f23645"/>
<rect x="497" y="152.1" width="3" height="12.8" fill="#f23645"/>
<rect x="502" y="157.0" width="1" height="47.0" fill="#f23645"/>
<rect x="501" y="163.9" width="3" height="40.1" fill="#f23645"/>
<rect x="505" y="193.0" width="1" height="49.9" fill="#f23645"/>
<rect x="504" y="203.0" width="3" height="26.9" fill="#f23645"/>
<rect x="509" y="217.0" width="1" height="47.9" fill="#089981"/>
<rect x="508" y="221.9" width="3" height="8.0" fill="#089981"/>
<rect x="512" y="202.0" width="1" height="40.9" fill="#f23645"/>
<rect x="511" y="221.9" width="3" height="17.0" fill="#f23645"/>
<rect x="515" y="229.9" width="1" height="19.0" fill="#f23645"/>
<rect x="514" y="238.1" width="3" height="1.0" fill="#f23645"/>
<rect x="519" y="201.0" width="1" height="44.9" fill="#089981"/>
<rect x="518" y="207.0" width="3" height="32.9" fill="#089981"/>
<rect x="522" y="187.9" width="1" height="32.0" fill="#089981"/>
<rect x="521" y="195.0" width="3" height="13.0" fill="#089981"/>
<rect x="526" y="193.0" width="1" height="19.0" fill="#f23645"/>
<rect x="525" y="195.0" width="3" height="14.0" fill="#f23645"/>
<rect x="529" y="205.0" width="1" height="28.9" fill="#f23645"/>
<rect x="528" y="208.0" width="3" height="23.9" fill="#f23645"/>
<rect x="532" y="217.9" width="1" height="30.0" fill="#f23645"/>
<rect x="531" y="230.9" width="3" height="15.0" fill="#f23645"/>
<rect x="536" y="234.9" width="1" height="17.0" fill="#089981"/>
<rect x="535" y="239.9" width="3" height="6.0" fill="#089981"/>
<rect x="539" y="239.9" width="1" height="16.0" fill="#f23645"/>
<rect x="538" y="239.9" width="3" height="14.0" fill="#f23645"/>
<rect x="543" y="241.9" width="1" height="23.0" fill="#f23645"/>
<rect x="542" y="252.9" width="3" height="6.0" fill="#f23645"/>
<rect x="546" y="249.9" width="1" height="18.1" fill="#f23645"/>
<rect x="545" y="257.9" width="3" height="9.1" fill="#f23645"/>
<rect x="549" y="241.9" width="1" height="28.1" fill="#089981"/>
<rect x="548" y="242.9" width="3" height="23.1" fill="#089981"/>
<rect x="553" y="227.9" width="1" height="16.0" fill="#089981"/>
<rect x="552" y="238.9" width="3" height="5.0" fill="#089981"/>
<rect x="556" y="215.0" width="1" height="29.9" fill="#089981"/>
<rect x="555" y="220.9" width="3" height="19.0" fill="#089981"/>
<rect x="560" y="213.0" width="1" height="14.9" fill="#089981"/>
<rect x="559" y="218.9" width="3" height="3.0" fill="#089981"/>
<rect x="563" y="215.9" width="1" height="13.0" fill="#f23645"/>
<rect x="562" y="218.9" width="3" height="1.0" fill="#f23645"/>
<rect x="566" y="204.0" width="1" height="22.9" fill="#089981"/>
<rect x="565" y="215.9" width="3" height="4.0" fill="#089981"/>
<rect x="570" y="215.9" width="1" height="34.0" fill="#f23645"/>
<rect x="569" y="215.9" width="3" height="33.0" fill="#f23645"/>
<rect x="573" y="242.9" width="1" height="28.1" fill="#f23645"/>
<rect x="572" y="247.9" width="3" height="12.6" fill="#f23645"/>
<rect x="577" y="256.2" width="1" height="20.6" fill="#f23645"/>
<rect x="576" y="259.9" width="3" height="11.2" fill="#f23645"/>
<rect x="580" y="259.3" width="1" height="12.5" fill="#089981"/>
<rect x="579" y="263.0" width="3" height="8.1" fill="#089981"/>
<rect x="583" y="256.8" width="1" height="11.2" fill="#f23645"/>
<rect x="582" y="261.8" width="3" height="1.0" fill="#f23645"/>
<rect x="587" y="261.2" width="1" height="10.0" fill="#f23645"/>
<rect x="586" y="262.7" width="3" height="6.6" fill="#f23645"/>
<rect x="590" y="259.9" width="1" height="33.9" fill="#f23645"/>
<rect x="589" y="268.0" width="3" height="7.1" fill="#f23645"/>
<rect x="594" y="258.9" width="1" height="15.9" fill="#089981"/>
<rect x="593" y="261.8" width="3" height="13.1" fill="#089981"/>
<rect x="597" y="237.0" width="1" height="26.9" fill="#089981"/>
<rect x="596" y="238.0" width="3" height="23.8" fill="#089981"/>
<rect x="600" y="217.0" width="1" height="31.7" fill="#089981"/>
<rect x="599" y="225.9" width="3" height="12.8" fill="#089981"/>
<rect x="604" y="197.9" width="1" height="28.9" fill="#089981"/>
<rect x="603" y="199.9" width="3" height="26.9" fill="#089981"/>
<rect x="607" y="191.9" width="1" height="29.9" fill="#f23645"/>
<rect x="606" y="199.9" width="3" height="13.0" fill="#f23645"/>
<rect x="611" y="179.0" width="1" height="57.9" fill="#089981"/>
<rect x="610" y="208.9" width="3" height="4.0" fill="#089981"/>
<rect x="614" y="176.0" width="1" height="45.9" fill="#089981"/>
<rect x="613" y="199.9" width="3" height="10.0" fill="#089981"/>
<rect x="617" y="174.0" width="1" height="43.9" fill="#089981"/>
<rect x="616" y="179.0" width="3" height="22.0" fill="#089981"/>
<rect x="621" y="172.0" width="1" height="26.9" fill="#f23645"/>
<rect x="620" y="179.0" width="3" height="19.0" fill="#f23645"/>
<rect x="624" y="185.0" width="1" height="28.9" fill="#089981"/>
<rect x="623" y="191.9" width="3" height="6.0" fill="#089981"/>
<rect x="628" y="182.0" width="1" height="21.0" fill="#f23645"/>
<rect x="627" y="191.9" width="3" height="8.0" fill="#f23645"/>
<rect x="631" y="194.9" width="1" height="10.0" fill="#f23645"/>
<rect x="630" y="198.9" width="3" height="4.0" fill="#f23645"/>
<rect x="634" y="183.0" width="1" height="20.0" fill="#f23645"/>
<rect x="633" y="202.1" width="3" height="1.0" fill="#f23645"/>
<rect x="638" y="198.9" width="1" height="37.9" fill="#f23645"/>
<rect x="637" y="201.9" width="3" height="10.0" fill="#f23645"/>
<rect x="641" y="204.9" width="1" height="29.9" fill="#f23645"/>
<rect x="640" y="210.9" width="3" height="22.0" fill="#f23645"/>
<rect x="645" y="207.9" width="1" height="27.9" fill="#089981"/>
<rect x="644" y="217.9" width="3" height="15.0" fill="#089981"/>
<rect x="648" y="197.9" width="1" height="23.0" fill="#089981"/>
<rect x="647" y="207.9" width="3" height="11.0" fill="#089981"/>
<rect x="652" y="183.0" width="1" height="28.9" fill="#089981"/>
<rect x="651" y="198.9" width="3" height="10.0" fill="#089981"/>
<rect x="655" y="188.0" width="1" height="41.9" fill="#f23645"/>
<rect x="654" y="198.9" width="3" height="28.9" fill="#f23645"/>
<rect x="658" y="222.9" width="1" height="52.0" fill="#f23645"/>
<rect x="657" y="226.9" width="3" height="34.0" fill="#f23645"/>
<rect x="662" y="239.4" width="1" height="85.3" fill="#089981"/>
<rect x="661" y="243.7" width="3" height="17.2" fill="#089981"/>
<rect x="665" y="243.7" width="1" height="31.1" fill="#f23645"/>
<rect x="664" y="243.7" width="3" height="23.0" fill="#f23645"/>
<rect x="669" y="262.2" width="1" height="16.4" fill="#f23645"/>
<rect x="668" y="265.9" width="3" height="10.8" fill="#f23645"/>
<rect x="672" y="266.1" width="1" height="19.7" fill="#f23645"/>
<rect x="671" y="276.1" width="3" height="8.7" fill="#f23645"/>
<rect x="675" y="268.0" width="1" height="25.8" fill="#f23645"/>
<rect x="674" y="284.2" width="3" height="3.7" fill="#f23645"/>
<rect x="679" y="283.0" width="1" height="10.0" fill="#089981"/>
<rect x="678" y="285.8" width="3" height="1.0" fill="#089981"/>
<rect x="682" y="279.2" width="1" height="19.6" fill="#f23645"/>
<rect x="681" y="286.1" width="3" height="2.7" fill="#f23645"/>
<rect x="686" y="277.4" width="1" height="18.4" fill="#089981"/>
<rect x="685" y="281.1" width="3" height="7.7" fill="#089981"/>
<rect x="689" y="268.0" width="1" height="20.8" fill="#f23645"/>
<rect x="688" y="281.1" width="3" height="2.7" fill="#f23645"/>
<rect x="692" y="272.1" width="1" height="23.7" fill="#089981"/>
<rect x="691" y="276.1" width="3" height="7.7" fill="#089981"/>
<rect x="696" y="274.2" width="1" height="14.6" fill="#f23645"/>
<rect x="695" y="276.1" width="3" height="8.5" fill="#f23645"/>
<rect x="699" y="268.0" width="1" height="17.8" fill="#089981"/>
<rect x="698" y="274.2" width="3" height="10.6" fill="#089981"/>
<rect x="703" y="270.1" width="1" height="11.6" fill="#f23645"/>
<rect x="702" y="274.2" width="3" height="5.6" fill="#f23645"/>
<rect x="706" y="275.1" width="1" height="8.7" fill="#f23645"/>
<rect x="705" y="279.2" width="3" height="4.6" fill="#f23645"/>
<rect x="709" y="268.0" width="1" height="18.7" fill="#089981"/>
<rect x="708" y="277.1" width="3" height="6.7" fill="#089981"/>
<rect x="713" y="276.1" width="1" height="24.7" fill="#f23645"/>
<rect x="712" y="277.1" width="3" height="16.7" fill="#f23645"/>
<rect x="716" y="289.2" width="1" height="9.6" fill="#089981"/>
<rect x="715" y="292.1" width="3" height="1.5" fill="#089981"/>
<rect x="720" y="285.1" width="1" height="8.7" fill="#089981"/>
<rect x="719" y="288.3" width="3" height="4.6" fill="#089981"/>
<rect x="723" y="278.0" width="1" height="25.0" fill="#f23645"/>
<rect x="722" y="288.1" width="3" height="11.8" fill="#f23645"/>
<rect x="726" y="291.2" width="1" height="9.3" fill="#089981"/>
<rect x="725" y="294.9" width="3" height="5.0" fill="#089981"/>
<rect x="730" y="290.0" width="1" height="8.7" fill="#f23645"/>
<rect x="729" y="294.9" width="3" height="3.1" fill="#f23645"/>
<rect x="733" y="294.9" width="1" height="35.9" fill="#f23645"/>
<rect x="732" y="297.2" width="3" height="30.8" fill="#f23645"/>
<rect x="737" y="323.0" width="1" height="19.9" fill="#089981"/>
<rect x="736" y="326.7" width="3" height="1.2" fill="#089981"/>
<rect x="740" y="320.1" width="1" height="14.7" fill="#f23645"/>
<rect x="739" y="326.7" width="3" height="1.2" fill="#f23645"/>
<rect x="743" y="320.1" width="1" height="12.8" fill="#f23645"/>
<rect x="742" y="326.7" width="3" height="3.1" fill="#f23645"/>
<rect x="747" y="328.0" width="1" height="23.0" fill="#f23645"/>
<rect x="746" y="328.8" width="3" height="5.0" fill="#f23645"/>
<rect x="750" y="328.8" width="1" height="12.2" fill="#f23645"/>
<rect x="749" y="332.9" width="3" height="1.2" fill="#f23645"/>
<rect x="754" y="296.8" width="1" height="41.1" fill="#089981"/>
<rect x="753" y="298.7" width="3" height="36.1" fill="#089981"/>
<rect x="757" y="298.1" width="1" height="40.7" fill="#f23645"/>
<rect x="756" y="298.7" width="3" height="40.1" fill="#f23645"/>
<rect x="760" y="326.1" width="1" height="28.7" fill="#089981"/>
<rect x="759" y="332.1" width="3" height="6.7" fill="#089981"/>
<rect x="764" y="309.9" width="1" height="24.9" fill="#089981"/>
<rect x="763" y="311.8" width="3" height="21.2" fill="#089981"/>
<rect x="767" y="295.9" width="1" height="17.1" fill="#089981"/>
<rect x="766" y="303.9" width="3" height="9.1" fill="#089981"/>
<rect x="771" y="298.1" width="1" height="23.0" fill="#f23645"/>
<rect x="770" y="303.9" width="3" height="14.7" fill="#f23645"/>
<rect x="774" y="316.8" width="1" height="12.1" fill="#f23645"/>
<rect x="773" y="317.4" width="3" height="10.6" fill="#f23645"/>
<rect x="777" y="325.8" width="1" height="22.9" fill="#f23645"/>
<rect x="776" y="326.7" width="3" height="20.6" fill="#f23645"/>
<rect x="781" y="336.1" width="1" height="28.0" fill="#f23645"/>
<rect x="780" y="346.0" width="3" height="16.2" fill="#f23645"/>
<rect x="784" y="347.9" width="1" height="23.0" fill="#089981"/>
<rect x="783" y="354.7" width="3" height="7.5" fill="#089981"/>
<rect x="788" y="346.0" width="1" height="14.9" fill="#089981"/>
<rect x="787" y="350.0" width="3" height="6.0" fill="#089981"/>
<rect x="791" y="349.1" width="1" height="10.6" fill="#f23645"/>
<rect x="790" y="350.0" width="3" height="7.2" fill="#f23645"/>
<rect x="794" y="333.8" width="1" height="23.2" fill="#089981"/>
<rect x="793" y="347.9" width="3" height="9.1" fill="#089981"/>
<rect x="798" y="339.8" width="1" height="9.0" fill="#089981"/>
<rect x="797" y="342.9" width="3" height="5.9" fill="#089981"/>
<rect x="801" y="341.0" width="1" height="13.1" fill="#f23645"/>
<rect x="800" y="342.9" width="3" height="10.0" fill="#f23645"/>
<rect x="805" y="339.8" width="1" height="13.1" fill="#089981"/>
<rect x="804" y="342.9" width="3" height="10.0" fill="#089981"/>
<rect x="808" y="339.8" width="1" height="11.2" fill="#f23645"/>
<rect x="807" y="342.9" width="3" height="3.1" fill="#f23645"/>
<rect x="811" y="329.8" width="1" height="17.2" fill="#089981"/>
<rect x="810" y="330.1" width="3" height="15.9" fill="#089981"/>
<rect x="815" y="328.0" width="1" height="14.9" fill="#f23645"/>
<rect x="814" y="329.8" width="3" height="12.2" fill="#f23645"/>
<rect x="818" y="337.9" width="1" height="8.1" fill="#f23645"/>
<rect x="817" y="341.0" width="3" height="4.0" fill="#f23645"/>
<rect x="822" y="337.1" width="1" height="7.7" fill="#089981"/>
<rect x="821" y="340.0" width="3" height="4.7" fill="#089981"/>
<rect x="825" y="336.7" width="1" height="4.1" fill="#089981"/>
<rect x="824" y="337.1" width="3" height="3.7" fill="#089981"/>
<rect x="828" y="324.8" width="1" height="16.2" fill="#089981"/>
<rect x="827" y="328.8" width="3" height="9.5" fill="#089981"/>
<rect x="832" y="323.0" width="1" height="8.7" fill="#089981"/>
<rect x="831" y="325.1" width="3" height="4.7" fill="#089981"/>
<rect x="835" y="318.0" width="1" height="12.8" fill="#f23645"/>
<rect x="834" y="325.1" width="3" height="2.9" fill="#f23645"/>
<rect x="839" y="320.1" width="1" height="7.8" fill="#089981"/>
<rect x="838" y="323.9" width="3" height="4.1" fill="#089981"/>
<rect x="842" y="323.0" width="1" height="20.8" fill="#f23645"/>
<rect x="841" y="323.9" width="3" height="17.2" fill="#f23645"/>
<rect x="845" y="337.9" width="1" height="14.1" fill="#f23645"/>
<rect x="844" y="339.8" width="3" height="10.2" fill="#f23645"/>
<rect x="849" y="345.0" width="1" height="9.1" fill="#f23645"/>
<rect x="848" y="349.1" width="3" height="3.1" fill="#f23645"/>
<rect x="852" y="347.0" width="1" height="10.0" fill="#089981"/>
<rect x="851" y="350.4" width="3" height="1.2" fill="#089981"/>
<rect x="856" y="337.9" width="1" height="13.1" fill="#089981"/>
<rect x="855" y="342.9" width="3" height="8.1" fill="#089981"/>
<rect x="859" y="337.9" width="1" height="21.2" fill="#f23645"/>
<rect x="858" y="342.9" width="3" height="16.2" fill="#f23645"/>
<rect x="862" y="351.9" width="1" height="14.1" fill="#089981"/>
<rect x="861" y="357.8" width="3" height="1.1" fill="#089981"/>
<rect x="866" y="354.1" width="1" height="11.0" fill="#089981"/>
<rect x="865" y="356.8" width="3" height="1.0" fill="#089981"/>
<rect x="869" y="356.0" width="1" height="5.9" fill="#f23645"/>
<rect x="868" y="356.8" width="3" height="1.6" fill="#f23645"/>
<rect x="873" y="357.1" width="1" height="24.9" fill="#f23645"/>
<rect x="872" y="358.8" width="3" height="21.6" fill="#f23645"/>
<rect x="876" y="371.1" width="1" height="22.7" fill="#089981"/>
<rect x="875" y="377.0" width="3" height="3.2" fill="#089981"/>
<rect x="879" y="371.1" width="1" height="14.1" fill="#f23645"/>
<rect x="878" y="375.6" width="3" height="8.9" fill="#f23645"/>
<rect x="883" y="359.2" width="1" height="30.8" fill="#089981"/>
<rect x="882" y="361.0" width="3" height="23.3" fill="#089981"/>
<rect x="886" y="361.0" width="1" height="13.3" fill="#f23645"/>
<rect x="885" y="361.0" width="3" height="8.2" fill="#f23645"/>
<rect x="890" y="358.2" width="1" height="11.9" fill="#089981"/>
<rect x="889" y="361.2" width="3" height="8.9" fill="#089981"/>
<rect x="893" y="353.0" width="1" height="9.6" fill="#089981"/>
<rect x="892" y="354.4" width="3" height="7.5" fill="#089981"/>
<rect x="896" y="354.1" width="1" height="9.9" fill="#f23645"/>
<rect x="895" y="354.4" width="3" height="7.5" fill="#f23645"/>
<rect x="900" y="353.0" width="1" height="8.9" fill="#089981"/>
<rect x="899" y="361.0" width="3" height="1.0" fill="#089981"/>
<rect x="903" y="359.2" width="1" height="7.8" fill="#f23645"/>
<rect x="902" y="361.0" width="3" height="6.0" fill="#f23645"/>
<rect x="907" y="363.3" width="1" height="7.5" fill="#089981"/>
<rect x="906" y="364.7" width="3" height="2.3" fill="#089981"/>
<rect x="910" y="360.1" width="1" height="6.6" fill="#089981"/>
<rect x="909" y="361.9" width="3" height="4.1" fill="#089981"/>
<rect x="913" y="360.1" width="1" height="3.8" fill="#089981"/>
<rect x="912" y="361.5" width="3" height="1.1" fill="#089981"/>
<rect x="917" y="356.0" width="1" height="6.8" fill="#089981"/>
<rect x="916" y="356.8" width="3" height="6.0" fill="#089981"/>
<rect x="920" y="348.9" width="1" height="8.9" fill="#089981"/>
<rect x="919" y="353.0" width="3" height="4.8" fill="#089981"/>
<rect x="924" y="346.8" width="1" height="10.3" fill="#f23645"/>
<rect x="923" y="353.0" width="3" height="3.4" fill="#f23645"/>
<rect x="927" y="341.0" width="1" height="16.8" fill="#089981"/>
<rect x="926" y="341.8" width="3" height="14.0" fill="#089981"/>
<rect x="930" y="327.0" width="1" height="15.8" fill="#089981"/>
<rect x="929" y="329.7" width="3" height="13.0" fill="#089981"/>
<rect x="934" y="329.0" width="1" height="13.0" fill="#089981"/>
<rect x="933" y="329.5" width="3" height="1.1" fill="#089981"/>
<rect x="937" y="325.9" width="1" height="7.9" fill="#f23645"/>
<rect x="936" y="329.7" width="3" height="3.4" fill="#f23645"/>
<rect x="941" y="327.0" width="1" height="8.2" fill="#f23645"/>
<rect x="940" y="331.8" width="3" height="1.4" fill="#f23645"/>
<rect x="944" y="329.0" width="1" height="10.0" fill="#f23645"/>
<rect x="943" y="331.8" width="3" height="4.8" fill="#f23645"/>
<rect x="948" y="329.0" width="1" height="11.0" fill="#089981"/>
<rect x="947" y="329.7" width="3" height="6.8" fill="#089981"/>
<rect x="951" y="327.0" width="1" height="10.3" fill="#f23645"/>
<rect x="950" y="329.7" width="3" height="6.8" fill="#f23645"/>
<rect x="954" y="333.8" width="1" height="12.1" fill="#f23645"/>
<rect x="953" y="335.9" width="3" height="5.1" fill="#f23645"/>
<rect x="958" y="330.0" width="1" height="11.0" fill="#089981"/>
<rect x="957" y="333.8" width="3" height="7.1" fill="#089981"/>
<rect x="961" y="330.0" width="1" height="7.3" fill="#f23645"/>
<rect x="960" y="333.8" width="3" height="2.1" fill="#f23645"/>
<rect x="965" y="334.9" width="1" height="6.0" fill="#f23645"/>
<rect x="964" y="334.9" width="3" height="5.8" fill="#f23645"/>
<rect x="968" y="339.0" width="1" height="7.1" fill="#f23645"/>
<rect x="967" y="339.6" width="3" height="6.3" fill="#f23645"/>
<rect x="971" y="341.0" width="1" height="9.0" fill="#f23645"/>
<rect x="970" y="344.8" width="3" height="4.1" fill="#f23645"/>
<rect x="975" y="344.8" width="1" height="9.3" fill="#089981"/>
<rect x="974" y="345.9" width="3" height="3.0" fill="#089981"/>
<rect x="978" y="342.1" width="1" height="8.9" fill="#089981"/>
<rect x="977" y="345.9" width="3" height="1.1" fill="#089981"/>
<rect x="982" y="318.1" width="1" height="28.9" fill="#089981"/>
<rect x="981" y="318.8" width="3" height="28.2" fill="#089981"/>
<rect x="985" y="307.8" width="1" height="15.1" fill="#089981"/>
<rect x="984" y="317.1" width="3" height="2.3" fill="#089981"/>
<rect x="988" y="298.9" width="1" height="19.9" fill="#089981"/>
<rect x="987" y="299.6" width="3" height="18.5" fill="#089981"/>
<rect x="992" y="298.9" width="1" height="15.1" fill="#f23645"/>
<rect x="991" y="299.6" width="3" height="4.1" fill="#f23645"/>
<rect x="995" y="291.8" width="1" height="24.9" fill="#f23645"/>
<rect x="994" y="302.8" width="3" height="6.2" fill="#f23645"/>
<rect x="999" y="293.9" width="1" height="22.9" fill="#089981"/>
<rect x="998" y="299.8" width="3" height="9.2" fill="#089981"/>
<rect x="1002" y="298.0" width="1" height="11.0" fill="#f23645"/>
<rect x="1001" y="298.7" width="3" height="6.2" fill="#f23645"/>
<rect x="1005" y="302.1" width="1" height="19.6" fill="#f23645"/>
<rect x="1004" y="303.9" width="3" height="14.0" fill="#f23645"/>
<rect x="1009" y="311.0" width="1" height="11.6" fill="#f23645"/>
<rect x="1008" y="316.8" width="3" height="5.2" fill="#f23645"/>
<rect x="1012" y="319.9" width="1" height="10.0" fill="#f23645"/>
<rect x="1011" y="320.6" width="3" height="6.2" fill="#f23645"/>
<rect x="1016" y="312.1" width="1" height="19.7" fill="#089981"/>
<rect x="1015" y="319.2" width="3" height="7.5" fill="#089981"/>
<rect x="1019" y="317.2" width="1" height="15.8" fill="#f23645"/>
<rect x="1018" y="319.2" width="3" height="1.6" fill="#f23645"/>
<rect x="1022" y="312.1" width="1" height="14.7" fill="#f23645"/>
<rect x="1021" y="319.9" width="3" height="1.8" fill="#f23645"/>
<rect x="1026" y="311.0" width="1" height="13.0" fill="#089981"/>
<rect x="1025" y="315.8" width="3" height="6.2" fill="#089981"/>
<rect x="1029" y="305.8" width="1" height="11.0" fill="#089981"/>
<rect x="1028" y="307.6" width="3" height="9.2" fill="#089981"/>
<rect x="1033" y="302.8" width="1" height="21.9" fill="#f23645"/>
<rect x="1032" y="308.0" width="3" height="16.7" fill="#f23645"/>
<rect x="1036" y="319.0" width="1" height="7.8" fill="#f23645"/>
<rect x="1035" y="324.0" width="3" height="2.7" fill="#f23645"/>
<rect x="1039" y="323.1" width="1" height="8.8" fill="#089981"/>
<rect x="1038" y="324.0" width="3" height="2.7" fill="#089981"/>
<rect x="1043" y="317.9" width="1" height="7.1" fill="#089981"/>
<rect x="1042" y="324.0" width="3" height="1.0" fill="#089981"/>
<rect x="1046" y="315.8" width="1" height="13.0" fill="#089981"/>
<rect x="1045" y="319.0" width="3" height="5.8" fill="#089981"/>
<rect x="1050" y="315.8" width="1" height="11.0" fill="#f23645"/>
<rect x="1049" y="319.0" width="3" height="4.1" fill="#f23645"/>
<rect x="1053" y="314.9" width="1" height="16.0" fill="#f23645"/>
<rect x="1052" y="321.7" width="3" height="9.2" fill="#f23645"/>
<rect x="1056" y="328.8" width="1" height="18.1" fill="#f23645"/>
<rect x="1055" y="329.9" width="3" height="16.0" fill="#f23645"/>
<rect x="1060" y="340.9" width="1" height="10.1" fill="#089981"/>
<rect x="1059" y="343.9" width="3" height="1.4" fill="#089981"/>
<rect x="1063" y="341.8" width="1" height="7.3" fill="#089981"/>
<rect x="1062" y="343.2" width="3" height="1.4" fill="#089981"/>
<rect x="1067" y="341.8" width="1" height="7.3" fill="#089981"/>
<rect x="1066" y="342.8" width="3" height="1.1" fill="#089981"/>
<rect x="1070" y="337.7" width="1" height="6.2" fill="#089981"/>
<rect x="1069" y="341.4" width="3" height="1.8" fill="#089981"/>
<rect x="1073" y="336.8" width="1" height="10.1" fill="#f23645"/>
<rect x="1072" y="341.8" width="3" height="5.1" fill="#f23645"/>
<rect x="1077" y="342.8" width="1" height="18.2" fill="#f23645"/>
<rect x="1076" y="346.0" width="3" height="13.0" fill="#f23645"/>
<rect x="1080" y="348.0" width="1" height="11.0" fill="#089981"/>
<rect x="1079" y="348.7" width="3" height="10.3" fill="#089981"/>
<rect x="1084" y="342.8" width="1" height="7.3" fill="#089981"/>
<rect x="1083" y="346.0" width="3" height="3.7" fill="#089981"/>
<rect x="1087" y="343.9" width="1" height="5.5" fill="#f23645"/>
<rect x="1086" y="346.0" width="3" height="2.3" fill="#f23645"/>
<rect x="1090" y="337.7" width="1" height="12.3" fill="#089981"/>
<rect x="1089" y="338.7" width="3" height="9.3" fill="#089981"/>
<rect x="1094" y="324.0" width="1" height="15.8" fill="#089981"/>
<rect x="1093" y="324.7" width="3" height="15.1" fill="#089981"/>
<rect x="1097" y="322.0" width="1" height="12.1" fill="#f23645"/>
<rect x="1096" y="324.7" width="3" height="8.2" fill="#f23645"/>
<rect x="1101" y="330.9" width="1" height="15.1" fill="#f23645"/>
<rect x="1100" y="331.8" width="3" height="13.4" fill="#f23645"/>
<rect x="1104" y="343.9" width="1" height="16.2" fill="#f23645"/>
<rect x="1103" y="344.2" width="3" height="7.9" fill="#f23645"/>
<rect x="1107" y="351.0" width="1" height="7.9" fill="#f23645"/>
<rect x="1106" y="351.4" width="3" height="4.8" fill="#f23645"/>
<rect x="1111" y="352.1" width="1" height="4.8" fill="#089981"/>
<rect x="1110" y="352.8" width="3" height="2.3" fill="#089981"/>
<rect x="1114" y="340.9" width="1" height="13.3" fill="#089981"/>
<rect x="1113" y="348.7" width="3" height="4.8" fill="#089981"/>
<rect x="1118" y="346.0" width="1" height="13.0" fill="#f23645"/>
<rect x="1117" y="348.7" width="3" height="9.6" fill="#f23645"/>
<rect x="1121" y="353.5" width="1" height="7.5" fill="#089981"/>
<rect x="1120" y="354.9" width="3" height="3.4" fill="#089981"/>
<rect x="1124" y="352.1" width="1" height="6.2" fill="#f23645"/>
<rect x="1123" y="355.1" width="3" height="1.1" fill="#f23645"/>
<rect x="1128" y="352.8" width="1" height="13.3" fill="#f23645"/>
<rect x="1127" y="355.5" width="3" height="8.9" fill="#f23645"/>
<rect x="1131" y="360.1" width="1" height="14.0" fill="#f23645"/>
<rect x="1130" y="363.1" width="3" height="6.8" fill="#f23645"/>
<rect x="1135" y="366.9" width="1" height="16.0" fill="#f23645"/>
<rect x="1134" y="369.2" width="3" height="5.5" fill="#f23645"/>
<rect x="1138" y="372.0" width="1" height="3.4" fill="#089981"/>
<rect x="1137" y="374.0" width="3" height="1.0" fill="#089981"/>
</g>
<!-- last price dotted line -->
<path class="crisp" d="M13 374.5H1408" stroke="#089981" stroke-width="1" stroke-dasharray="1 2"/>
<!-- pane separator -->
<rect class="crisp" x="14" y="534" width="1475" height="1" fill="#2e2e2e"/>
<!-- RSI levels -->
<g stroke="#80808a" stroke-width="1" stroke-dasharray="5 6" stroke-dashoffset="1" class="crisp">
<path d="M14 588.5H1408M14 640.5H1408M14 691.5H1408"/>
</g>
<defs>
<linearGradient id="ob" gradientUnits="userSpaceOnUse" x1="0" y1="511" x2="0" y2="588"><stop offset="0" stop-color="#4caf50" stop-opacity="0.7"/><stop offset="1" stop-color="#4caf50" stop-opacity="0"/></linearGradient>
<linearGradient id="os" gradientUnits="userSpaceOnUse" x1="0" y1="692" x2="0" y2="769"><stop offset="0" stop-color="#ff5252" stop-opacity="0"/><stop offset="1" stop-color="#ff5252" stop-opacity="0.7"/></linearGradient>
<clipPath id="crsi"><rect x="14" y="535" width="1394" height="188"/></clipPath>
<clipPath id="cob"><rect x="14" y="535" width="1394" height="53"/></clipPath>
<clipPath id="cos"><rect x="14" y="692" width="1394" height="31"/></clipPath>
</defs>
<path d="M12.0 644.0 L15.0 649.1 L19.0 643.5 L22.0 651.9 L25.0 658.6 L29.0 657.5 L32.0 676.0 L36.0 679.9 L39.0 690.0 L42.0 707.4 L46.0 691.1 L49.0 697.8 L53.0 667.6 L56.0 670.4 L60.0 669.8 L63.0 677.4 L66.0 664.2 L70.0 663.7 L73.0 667.0 L77.0 670.9 L80.0 671.5 L83.0 670.4 L87.0 671.8 L90.0 669.3 L94.0 667.0 L97.0 636.2 L100.0 629.5 L104.0 618.0 L107.0 610.5 L111.0 619.9 L114.0 626.7 L117.0 644.8 L121.0 644.5 L124.0 650.4 L128.0 645.2 L131.0 648.3 L134.0 664.7 L138.0 651.9 L141.0 662.2 L145.0 661.6 L148.0 668.5 L151.0 679.0 L155.0 661.6 L158.0 652.9 L162.0 647.3 L165.0 645.4 L168.0 650.8 L172.0 638.6 L175.0 619.9 L179.0 629.2 L182.0 639.8 L185.0 647.6 L189.0 644.5 L192.0 634.8 L196.0 626.1 L199.0 621.1 L202.0 619.2 L206.0 632.9 L209.0 624.8 L213.0 605.5 L216.0 606.5 L219.0 597.4 L223.0 594.7 L226.0 589.3 L230.0 613.6 L233.0 632.3 L236.0 648.0 L240.0 660.7 L243.0 660.7 L247.0 647.9 L250.0 642.0 L253.0 642.3 L257.0 645.7 L260.0 654.1 L264.0 663.2 L267.0 662.2 L270.0 649.1 L274.0 645.1 L277.0 653.5 L281.0 634.2 L284.0 629.5 L287.0 635.4 L291.0 644.5 L294.0 629.2 L298.0 631.3 L301.0 614.6 L304.0 624.8 L308.0 617.6 L311.0 639.8 L315.0 631.0 L318.0 644.7 L321.0 648.5 L325.0 650.4 L328.0 643.5 L332.0 623.6 L335.0 609.6 L338.0 638.8 L342.0 643.5 L345.0 645.0 L349.0 656.0 L352.0 667.4 L356.0 649.7 L359.0 619.8 L362.0 609.9 L366.0 595.5 L369.0 594.3 L373.0 588.7 L376.0 580.6 L379.0 605.3 L383.0 617.8 L386.0 627.1 L390.0 612.2 L393.0 604.7 L396.0 620.3 L400.0 601.6 L403.0 612.8 L407.0 620.5 L410.0 612.8 L413.0 594.3 L417.0 586.6 L420.0 582.9 L424.0 594.3 L427.0 594.1 L430.0 582.3 L434.0 596.6 L437.0 592.8 L441.0 586.6 L444.0 588.1 L447.0 553.6 L451.0 570.8 L454.0 570.8 L458.0 584.8 L461.0 571.4 L464.0 585.4 L468.0 579.1 L471.0 619.3 L475.0 620.6 L478.0 608.4 L481.0 585.4 L485.0 586.4 L488.0 585.6 L492.0 585.1 L495.0 590.4 L498.0 600.3 L502.0 629.0 L505.0 642.9 L509.0 639.6 L512.0 647.0 L515.0 648.3 L519.0 629.9 L522.0 623.6 L526.0 633.0 L529.0 644.8 L532.0 652.3 L536.0 649.5 L539.0 656.7 L543.0 659.1 L546.0 663.5 L549.0 647.3 L553.0 643.6 L556.0 632.4 L560.0 630.9 L563.0 630.9 L566.0 628.6 L570.0 652.9 L573.0 659.8 L577.0 666.2 L580.0 659.5 L583.0 660.0 L587.0 664.1 L590.0 667.5 L594.0 654.8 L597.0 634.2 L600.0 626.8 L604.0 608.7 L607.0 619.9 L611.0 618.0 L614.0 612.4 L617.0 599.7 L621.0 616.2 L624.0 613.4 L628.0 619.3 L631.0 622.4 L634.0 623.4 L638.0 631.7 L641.0 650.0 L645.0 637.3 L648.0 629.9 L652.0 622.6 L655.0 643.6 L658.0 667.3 L662.0 654.8 L665.0 666.7 L669.0 673.5 L672.0 676.7 L675.0 677.9 L679.0 677.0 L682.0 678.3 L686.0 670.4 L689.0 671.3 L692.0 663.8 L696.0 670.0 L699.0 658.0 L703.0 662.3 L706.0 665.1 L709.0 658.8 L713.0 671.7 L716.0 670.0 L720.0 664.8 L723.0 674.2 L726.0 668.6 L730.0 669.8 L733.0 692.2 L737.0 691.6 L740.0 692.0 L743.0 693.7 L747.0 696.2 L750.0 697.0 L754.0 645.5 L757.0 676.0 L760.0 670.8 L764.0 649.9 L767.0 642.6 L771.0 654.2 L774.0 660.1 L777.0 670.4 L781.0 681.6 L784.0 676.0 L788.0 670.4 L791.0 673.8 L794.0 664.8 L798.0 659.8 L801.0 666.3 L805.0 656.7 L808.0 657.9 L811.0 642.3 L815.0 652.1 L818.0 654.8 L822.0 649.8 L825.0 646.7 L828.0 637.4 L832.0 632.6 L835.0 635.9 L839.0 631.8 L842.0 651.7 L845.0 660.4 L849.0 662.9 L852.0 660.4 L856.0 650.8 L859.0 666.6 L862.0 667.0 L866.0 665.8 L869.0 667.3 L873.0 687.4 L876.0 683.2 L879.0 689.9 L883.0 653.8 L886.0 661.3 L890.0 649.8 L893.0 643.3 L896.0 650.8 L900.0 651.7 L903.0 656.9 L907.0 654.2 L910.0 650.4 L913.0 649.2 L917.0 641.7 L920.0 634.6 L924.0 638.4 L927.0 618.0 L930.0 604.3 L934.0 603.6 L937.0 607.4 L941.0 609.6 L944.0 617.6 L948.0 609.2 L951.0 621.1 L954.0 628.3 L958.0 619.6 L961.0 622.9 L965.0 634.2 L968.0 642.3 L971.0 647.9 L975.0 643.3 L978.0 642.9 L982.0 599.9 L985.0 598.4 L988.0 581.5 L992.0 589.9 L995.0 598.0 L999.0 589.7 L1002.0 599.9 L1005.0 622.3 L1009.0 628.6 L1012.0 637.3 L1016.0 627.3 L1019.0 629.2 L1022.0 631.0 L1026.0 622.3 L1029.0 612.4 L1033.0 638.5 L1036.0 642.3 L1039.0 638.3 L1043.0 637.9 L1046.0 630.8 L1050.0 636.7 L1053.0 649.7 L1056.0 670.0 L1060.0 667.9 L1063.0 666.3 L1067.0 666.0 L1070.0 664.5 L1073.0 670.4 L1077.0 687.2 L1080.0 667.3 L1084.0 659.6 L1087.0 661.7 L1090.0 646.1 L1094.0 621.6 L1097.0 636.8 L1101.0 653.0 L1104.0 660.4 L1107.0 665.7 L1111.0 660.4 L1114.0 655.8 L1118.0 666.0 L1121.0 662.6 L1124.0 663.3 L1128.0 673.5 L1131.0 680.4 L1135.0 687.2 L1138.0 687.2 L1138.0 588 L12.0 588Z" fill="url(#ob)" clip-path="url(#cob)"/>
<path d="M12.0 644.0 L15.0 649.1 L19.0 643.5 L22.0 651.9 L25.0 658.6 L29.0 657.5 L32.0 676.0 L36.0 679.9 L39.0 690.0 L42.0 707.4 L46.0 691.1 L49.0 697.8 L53.0 667.6 L56.0 670.4 L60.0 669.8 L63.0 677.4 L66.0 664.2 L70.0 663.7 L73.0 667.0 L77.0 670.9 L80.0 671.5 L83.0 670.4 L87.0 671.8 L90.0 669.3 L94.0 667.0 L97.0 636.2 L100.0 629.5 L104.0 618.0 L107.0 610.5 L111.0 619.9 L114.0 626.7 L117.0 644.8 L121.0 644.5 L124.0 650.4 L128.0 645.2 L131.0 648.3 L134.0 664.7 L138.0 651.9 L141.0 662.2 L145.0 661.6 L148.0 668.5 L151.0 679.0 L155.0 661.6 L158.0 652.9 L162.0 647.3 L165.0 645.4 L168.0 650.8 L172.0 638.6 L175.0 619.9 L179.0 629.2 L182.0 639.8 L185.0 647.6 L189.0 644.5 L192.0 634.8 L196.0 626.1 L199.0 621.1 L202.0 619.2 L206.0 632.9 L209.0 624.8 L213.0 605.5 L216.0 606.5 L219.0 597.4 L223.0 594.7 L226.0 589.3 L230.0 613.6 L233.0 632.3 L236.0 648.0 L240.0 660.7 L243.0 660.7 L247.0 647.9 L250.0 642.0 L253.0 642.3 L257.0 645.7 L260.0 654.1 L264.0 663.2 L267.0 662.2 L270.0 649.1 L274.0 645.1 L277.0 653.5 L281.0 634.2 L284.0 629.5 L287.0 635.4 L291.0 644.5 L294.0 629.2 L298.0 631.3 L301.0 614.6 L304.0 624.8 L308.0 617.6 L311.0 639.8 L315.0 631.0 L318.0 644.7 L321.0 648.5 L325.0 650.4 L328.0 643.5 L332.0 623.6 L335.0 609.6 L338.0 638.8 L342.0 643.5 L345.0 645.0 L349.0 656.0 L352.0 667.4 L356.0 649.7 L359.0 619.8 L362.0 609.9 L366.0 595.5 L369.0 594.3 L373.0 588.7 L376.0 580.6 L379.0 605.3 L383.0 617.8 L386.0 627.1 L390.0 612.2 L393.0 604.7 L396.0 620.3 L400.0 601.6 L403.0 612.8 L407.0 620.5 L410.0 612.8 L413.0 594.3 L417.0 586.6 L420.0 582.9 L424.0 594.3 L427.0 594.1 L430.0 582.3 L434.0 596.6 L437.0 592.8 L441.0 586.6 L444.0 588.1 L447.0 553.6 L451.0 570.8 L454.0 570.8 L458.0 584.8 L461.0 571.4 L464.0 585.4 L468.0 579.1 L471.0 619.3 L475.0 620.6 L478.0 608.4 L481.0 585.4 L485.0 586.4 L488.0 585.6 L492.0 585.1 L495.0 590.4 L498.0 600.3 L502.0 629.0 L505.0 642.9 L509.0 639.6 L512.0 647.0 L515.0 648.3 L519.0 629.9 L522.0 623.6 L526.0 633.0 L529.0 644.8 L532.0 652.3 L536.0 649.5 L539.0 656.7 L543.0 659.1 L546.0 663.5 L549.0 647.3 L553.0 643.6 L556.0 632.4 L560.0 630.9 L563.0 630.9 L566.0 628.6 L570.0 652.9 L573.0 659.8 L577.0 666.2 L580.0 659.5 L583.0 660.0 L587.0 664.1 L590.0 667.5 L594.0 654.8 L597.0 634.2 L600.0 626.8 L604.0 608.7 L607.0 619.9 L611.0 618.0 L614.0 612.4 L617.0 599.7 L621.0 616.2 L624.0 613.4 L628.0 619.3 L631.0 622.4 L634.0 623.4 L638.0 631.7 L641.0 650.0 L645.0 637.3 L648.0 629.9 L652.0 622.6 L655.0 643.6 L658.0 667.3 L662.0 654.8 L665.0 666.7 L669.0 673.5 L672.0 676.7 L675.0 677.9 L679.0 677.0 L682.0 678.3 L686.0 670.4 L689.0 671.3 L692.0 663.8 L696.0 670.0 L699.0 658.0 L703.0 662.3 L706.0 665.1 L709.0 658.8 L713.0 671.7 L716.0 670.0 L720.0 664.8 L723.0 674.2 L726.0 668.6 L730.0 669.8 L733.0 692.2 L737.0 691.6 L740.0 692.0 L743.0 693.7 L747.0 696.2 L750.0 697.0 L754.0 645.5 L757.0 676.0 L760.0 670.8 L764.0 649.9 L767.0 642.6 L771.0 654.2 L774.0 660.1 L777.0 670.4 L781.0 681.6 L784.0 676.0 L788.0 670.4 L791.0 673.8 L794.0 664.8 L798.0 659.8 L801.0 666.3 L805.0 656.7 L808.0 657.9 L811.0 642.3 L815.0 652.1 L818.0 654.8 L822.0 649.8 L825.0 646.7 L828.0 637.4 L832.0 632.6 L835.0 635.9 L839.0 631.8 L842.0 651.7 L845.0 660.4 L849.0 662.9 L852.0 660.4 L856.0 650.8 L859.0 666.6 L862.0 667.0 L866.0 665.8 L869.0 667.3 L873.0 687.4 L876.0 683.2 L879.0 689.9 L883.0 653.8 L886.0 661.3 L890.0 649.8 L893.0 643.3 L896.0 650.8 L900.0 651.7 L903.0 656.9 L907.0 654.2 L910.0 650.4 L913.0 649.2 L917.0 641.7 L920.0 634.6 L924.0 638.4 L927.0 618.0 L930.0 604.3 L934.0 603.6 L937.0 607.4 L941.0 609.6 L944.0 617.6 L948.0 609.2 L951.0 621.1 L954.0 628.3 L958.0 619.6 L961.0 622.9 L965.0 634.2 L968.0 642.3 L971.0 647.9 L975.0 643.3 L978.0 642.9 L982.0 599.9 L985.0 598.4 L988.0 581.5 L992.0 589.9 L995.0 598.0 L999.0 589.7 L1002.0 599.9 L1005.0 622.3 L1009.0 628.6 L1012.0 637.3 L1016.0 627.3 L1019.0 629.2 L1022.0 631.0 L1026.0 622.3 L1029.0 612.4 L1033.0 638.5 L1036.0 642.3 L1039.0 638.3 L1043.0 637.9 L1046.0 630.8 L1050.0 636.7 L1053.0 649.7 L1056.0 670.0 L1060.0 667.9 L1063.0 666.3 L1067.0 666.0 L1070.0 664.5 L1073.0 670.4 L1077.0 687.2 L1080.0 667.3 L1084.0 659.6 L1087.0 661.7 L1090.0 646.1 L1094.0 621.6 L1097.0 636.8 L1101.0 653.0 L1104.0 660.4 L1107.0 665.7 L1111.0 660.4 L1114.0 655.8 L1118.0 666.0 L1121.0 662.6 L1124.0 663.3 L1128.0 673.5 L1131.0 680.4 L1135.0 687.2 L1138.0 687.2 L1138.0 692 L12.0 692Z" fill="url(#os)" clip-path="url(#cos)"/>
<path d="M12.0 644.0 L15.0 649.1 L19.0 643.5 L22.0 651.9 L25.0 658.6 L29.0 657.5 L32.0 676.0 L36.0 679.9 L39.0 690.0 L42.0 707.4 L46.0 691.1 L49.0 697.8 L53.0 667.6 L56.0 670.4 L60.0 669.8 L63.0 677.4 L66.0 664.2 L70.0 663.7 L73.0 667.0 L77.0 670.9 L80.0 671.5 L83.0 670.4 L87.0 671.8 L90.0 669.3 L94.0 667.0 L97.0 636.2 L100.0 629.5 L104.0 618.0 L107.0 610.5 L111.0 619.9 L114.0 626.7 L117.0 644.8 L121.0 644.5 L124.0 650.4 L128.0 645.2 L131.0 648.3 L134.0 664.7 L138.0 651.9 L141.0 662.2 L145.0 661.6 L148.0 668.5 L151.0 679.0 L155.0 661.6 L158.0 652.9 L162.0 647.3 L165.0 645.4 L168.0 650.8 L172.0 638.6 L175.0 619.9 L179.0 629.2 L182.0 639.8 L185.0 647.6 L189.0 644.5 L192.0 634.8 L196.0 626.1 L199.0 621.1 L202.0 619.2 L206.0 632.9 L209.0 624.8 L213.0 605.5 L216.0 606.5 L219.0 597.4 L223.0 594.7 L226.0 589.3 L230.0 613.6 L233.0 632.3 L236.0 648.0 L240.0 660.7 L243.0 660.7 L247.0 647.9 L250.0 642.0 L253.0 642.3 L257.0 645.7 L260.0 654.1 L264.0 663.2 L267.0 662.2 L270.0 649.1 L274.0 645.1 L277.0 653.5 L281.0 634.2 L284.0 629.5 L287.0 635.4 L291.0 644.5 L294.0 629.2 L298.0 631.3 L301.0 614.6 L304.0 624.8 L308.0 617.6 L311.0 639.8 L315.0 631.0 L318.0 644.7 L321.0 648.5 L325.0 650.4 L328.0 643.5 L332.0 623.6 L335.0 609.6 L338.0 638.8 L342.0 643.5 L345.0 645.0 L349.0 656.0 L352.0 667.4 L356.0 649.7 L359.0 619.8 L362.0 609.9 L366.0 595.5 L369.0 594.3 L373.0 588.7 L376.0 580.6 L379.0 605.3 L383.0 617.8 L386.0 627.1 L390.0 612.2 L393.0 604.7 L396.0 620.3 L400.0 601.6 L403.0 612.8 L407.0 620.5 L410.0 612.8 L413.0 594.3 L417.0 586.6 L420.0 582.9 L424.0 594.3 L427.0 594.1 L430.0 582.3 L434.0 596.6 L437.0 592.8 L441.0 586.6 L444.0 588.1 L447.0 553.6 L451.0 570.8 L454.0 570.8 L458.0 584.8 L461.0 571.4 L464.0 585.4 L468.0 579.1 L471.0 619.3 L475.0 620.6 L478.0 608.4 L481.0 585.4 L485.0 586.4 L488.0 585.6 L492.0 585.1 L495.0 590.4 L498.0 600.3 L502.0 629.0 L505.0 642.9 L509.0 639.6 L512.0 647.0 L515.0 648.3 L519.0 629.9 L522.0 623.6 L526.0 633.0 L529.0 644.8 L532.0 652.3 L536.0 649.5 L539.0 656.7 L543.0 659.1 L546.0 663.5 L549.0 647.3 L553.0 643.6 L556.0 632.4 L560.0 630.9 L563.0 630.9 L566.0 628.6 L570.0 652.9 L573.0 659.8 L577.0 666.2 L580.0 659.5 L583.0 660.0 L587.0 664.1 L590.0 667.5 L594.0 654.8 L597.0 634.2 L600.0 626.8 L604.0 608.7 L607.0 619.9 L611.0 618.0 L614.0 612.4 L617.0 599.7 L621.0 616.2 L624.0 613.4 L628.0 619.3 L631.0 622.4 L634.0 623.4 L638.0 631.7 L641.0 650.0 L645.0 637.3 L648.0 629.9 L652.0 622.6 L655.0 643.6 L658.0 667.3 L662.0 654.8 L665.0 666.7 L669.0 673.5 L672.0 676.7 L675.0 677.9 L679.0 677.0 L682.0 678.3 L686.0 670.4 L689.0 671.3 L692.0 663.8 L696.0 670.0 L699.0 658.0 L703.0 662.3 L706.0 665.1 L709.0 658.8 L713.0 671.7 L716.0 670.0 L720.0 664.8 L723.0 674.2 L726.0 668.6 L730.0 669.8 L733.0 692.2 L737.0 691.6 L740.0 692.0 L743.0 693.7 L747.0 696.2 L750.0 697.0 L754.0 645.5 L757.0 676.0 L760.0 670.8 L764.0 649.9 L767.0 642.6 L771.0 654.2 L774.0 660.1 L777.0 670.4 L781.0 681.6 L784.0 676.0 L788.0 670.4 L791.0 673.8 L794.0 664.8 L798.0 659.8 L801.0 666.3 L805.0 656.7 L808.0 657.9 L811.0 642.3 L815.0 652.1 L818.0 654.8 L822.0 649.8 L825.0 646.7 L828.0 637.4 L832.0 632.6 L835.0 635.9 L839.0 631.8 L842.0 651.7 L845.0 660.4 L849.0 662.9 L852.0 660.4 L856.0 650.8 L859.0 666.6 L862.0 667.0 L866.0 665.8 L869.0 667.3 L873.0 687.4 L876.0 683.2 L879.0 689.9 L883.0 653.8 L886.0 661.3 L890.0 649.8 L893.0 643.3 L896.0 650.8 L900.0 651.7 L903.0 656.9 L907.0 654.2 L910.0 650.4 L913.0 649.2 L917.0 641.7 L920.0 634.6 L924.0 638.4 L927.0 618.0 L930.0 604.3 L934.0 603.6 L937.0 607.4 L941.0 609.6 L944.0 617.6 L948.0 609.2 L951.0 621.1 L954.0 628.3 L958.0 619.6 L961.0 622.9 L965.0 634.2 L968.0 642.3 L971.0 647.9 L975.0 643.3 L978.0 642.9 L982.0 599.9 L985.0 598.4 L988.0 581.5 L992.0 589.9 L995.0 598.0 L999.0 589.7 L1002.0 599.9 L1005.0 622.3 L1009.0 628.6 L1012.0 637.3 L1016.0 627.3 L1019.0 629.2 L1022.0 631.0 L1026.0 622.3 L1029.0 612.4 L1033.0 638.5 L1036.0 642.3 L1039.0 638.3 L1043.0 637.9 L1046.0 630.8 L1050.0 636.7 L1053.0 649.7 L1056.0 670.0 L1060.0 667.9 L1063.0 666.3 L1067.0 666.0 L1070.0 664.5 L1073.0 670.4 L1077.0 687.2 L1080.0 667.3 L1084.0 659.6 L1087.0 661.7 L1090.0 646.1 L1094.0 621.6 L1097.0 636.8 L1101.0 653.0 L1104.0 660.4 L1107.0 665.7 L1111.0 660.4 L1114.0 655.8 L1118.0 666.0 L1121.0 662.6 L1124.0 663.3 L1128.0 673.5 L1131.0 680.4 L1135.0 687.2 L1138.0 687.2" clip-path="url(#crsi)" fill="none" stroke="#7e57c2" stroke-width="1.25" stroke-linejoin="round"/>
<!-- legends -->
<!-- price axis -->
<!-- USDT button -->
<rect x="1413" y="39" width="72" height="32" rx="4.5" ry="4.5" fill="#0f0f0f" stroke="#313131" stroke-width="2"/>
<!-- price labels -->
<path d="M1409 364H1482a2 2 0 0 1 2 2V401a2 2 0 0 1 -2 2H1409Z" fill="#089981"/>
<path d="M1409 513H1480a2 2 0 0 1 2 2V532a2 2 0 0 1 -2 2H1409Z" fill="#26a69a"/>
<path d="M1409 677H1461a2 2 0 0 1 2 2V696a2 2 0 0 1 -2 2H1409Z" fill="#7e57c2"/>
<!-- time axis -->
<!-- TradingView logo -->
<g fill="#dcdcdc">
<path d="M13 774.8H23V786.8H17.8V779.4H13Z"/>
<circle cx="26.8" cy="777.5" r="2.65"/>
<path d="M32 774.8H37.3L32.4 786.8H27Z"/>
</g>
<text y="24.6" style="font-size:15.3px;fill:#dcdcdc;stroke:#dcdcdc;stroke-width:0.3px"><tspan y="24.6" x="13.00" textLength="54.78" lengthAdjust="spacingAndGlyphs">SN_Nour</tspan> <tspan y="24.6" x="74.20" textLength="63.69" lengthAdjust="spacingAndGlyphs">published</tspan> <tspan y="24.6" x="142.70" textLength="16.29" lengthAdjust="spacingAndGlyphs">on</tspan> <tspan y="24.6" x="164.10" textLength="117.11" lengthAdjust="spacingAndGlyphs">TradingView.com,</tspan> <tspan y="24.6" x="287.00" textLength="23.07" lengthAdjust="spacingAndGlyphs">Jun</tspan> <tspan y="24.6" x="315.30" textLength="20.29" lengthAdjust="spacingAndGlyphs">23,</tspan> <tspan y="24.6" x="340.80" textLength="30.05" lengthAdjust="spacingAndGlyphs">2025</tspan> <tspan y="24.6" x="376.50" textLength="35.54" lengthAdjust="spacingAndGlyphs">02:14</tspan> <tspan y="24.6" x="417.11" textLength="27.93" lengthAdjust="spacingAndGlyphs">UTC</tspan></text>
<text y="59" style="font-size:15.3px;fill:#c9c9c9;stroke:#c9c9c9;stroke-width:0.3px"><tspan y="59" x="23.10" textLength="64.47" lengthAdjust="spacingAndGlyphs">ChainLink</tspan> <tspan y="59" x="94.10" textLength="4.93" lengthAdjust="spacingAndGlyphs">/</tspan> <tspan y="59" x="106.60" textLength="58.08" lengthAdjust="spacingAndGlyphs">TetherUS</tspan> <tspan style="font-size:21px" y="59.30" x="169.80" textLength="5.59" lengthAdjust="spacingAndGlyphs">·</tspan> <tspan y="59" x="179.64" textLength="16.80" lengthAdjust="spacingAndGlyphs">1D</tspan> <tspan style="font-size:21px" y="59.30" x="201.00" textLength="5.59" lengthAdjust="spacingAndGlyphs">·</tspan> <tspan y="59" x="210.96" textLength="56.91" lengthAdjust="spacingAndGlyphs">BINANCE</tspan></text>
<text y="59" style="font-size:15.3px;fill:#c9c9c9;stroke:#c9c9c9;stroke-width:0.3px"><tspan y="59" x="278.10" textLength="9.92" lengthAdjust="spacingAndGlyphs">O</tspan></text>
<text y="59" style="font-size:15.3px;fill:#089981;stroke:#089981;stroke-width:0.3px"><tspan y="59" x="290.36" textLength="35.02" lengthAdjust="spacingAndGlyphs">11.65</tspan></text>
<text y="59" style="font-size:15.3px;fill:#c9c9c9;stroke:#c9c9c9;stroke-width:0.3px"><tspan y="59" x="333.94" textLength="10.56" lengthAdjust="spacingAndGlyphs">H</tspan></text>
<text y="59" style="font-size:15.3px;fill:#089981;stroke:#089981;stroke-width:0.3px"><tspan y="59" x="345.23" textLength="35.96" lengthAdjust="spacingAndGlyphs">11.77</tspan></text>
<text y="59" style="font-size:15.3px;fill:#c9c9c9;stroke:#c9c9c9;stroke-width:0.3px"><tspan y="59" x="389.76" textLength="8.02" lengthAdjust="spacingAndGlyphs">L</tspan></text>
<text y="59" style="font-size:15.3px;fill:#089981;stroke:#089981;stroke-width:0.3px"><tspan y="59" x="398.95" textLength="35.44" lengthAdjust="spacingAndGlyphs">11.55</tspan></text>
<text y="59" style="font-size:15.3px;fill:#c9c9c9;stroke:#c9c9c9;stroke-width:0.3px"><tspan y="59" x="443.90" textLength="8.13" lengthAdjust="spacingAndGlyphs">C</tspan></text>
<text y="59" style="font-size:15.3px;fill:#089981;stroke:#089981;stroke-width:0.3px"><tspan y="59" x="454.25" textLength="35.13" lengthAdjust="spacingAndGlyphs">11.65</tspan></text>
<text y="59" style="font-size:15.3px;fill:#089981;stroke:#089981;stroke-width:0.3px"><tspan y="59" x="498.90" textLength="28.08" lengthAdjust="spacingAndGlyphs">0.00</tspan> <tspan y="59" x="533.60" textLength="47.28" lengthAdjust="spacingAndGlyphs">(0.00%)</tspan></text>
<text y="80" style="font-size:15.3px;fill:#c9c9c9;stroke:#c9c9c9;stroke-width:0.3px"><tspan y="80" x="23.10" textLength="20.28" lengthAdjust="spacingAndGlyphs">Vol</tspan> <tspan style="font-size:21px" y="80.30" x="47.50" textLength="5.59" lengthAdjust="spacingAndGlyphs">·</tspan> <tspan y="80" x="56.92" textLength="29.78" lengthAdjust="spacingAndGlyphs">LINK</tspan></text>
<text y="80" style="font-size:15.3px;fill:#26a69a;stroke:#26a69a;stroke-width:0.3px"><tspan y="80" x="97.60" textLength="44.28" lengthAdjust="spacingAndGlyphs">269.38</tspan> <tspan y="80" x="143.87" textLength="8.47" lengthAdjust="spacingAndGlyphs">K</tspan></text>
<text y="559.7" style="font-size:15.3px;fill:#c9c9c9;stroke:#c9c9c9;stroke-width:0.3px"><tspan y="559.7" x="22.91" textLength="20.18" lengthAdjust="spacingAndGlyphs">RSI</tspan> <tspan y="559.7" x="48.90" textLength="25.61" lengthAdjust="spacingAndGlyphs">(14,</tspan> <tspan y="559.7" x="78.90" textLength="39.19" lengthAdjust="spacingAndGlyphs">close)</tspan></text>
<text y="559.7" style="font-size:15.3px;fill:#7e57c2;stroke:#7e57c2;stroke-width:0.3px"><tspan y="559.7" x="127.80" textLength="36.33" lengthAdjust="spacingAndGlyphs">31.54</tspan></text>
<text y="116.0" style="font-size:15.3px;fill:#b6b6b6;stroke:#b6b6b6;stroke-width:0.15px"><tspan y="116.0" x="1419.20" textLength="37.60" lengthAdjust="spacingAndGlyphs">32.00</tspan></text>
<text y="167.9" style="font-size:15.3px;fill:#b6b6b6;stroke:#b6b6b6;stroke-width:0.15px"><tspan y="167.9" x="1419.20" textLength="37.60" lengthAdjust="spacingAndGlyphs">28.00</tspan></text>
<text y="219.7" style="font-size:15.3px;fill:#b6b6b6;stroke:#b6b6b6;stroke-width:0.15px"><tspan y="219.7" x="1419.20" textLength="37.60" lengthAdjust="spacingAndGlyphs">24.00</tspan></text>
<text y="271.6" style="font-size:15.3px;fill:#b6b6b6;stroke:#b6b6b6;stroke-width:0.15px"><tspan y="271.6" x="1419.20" textLength="37.60" lengthAdjust="spacingAndGlyphs">20.00</tspan></text>
<text y="323.5" style="font-size:15.3px;fill:#b6b6b6;stroke:#b6b6b6;stroke-width:0.15px"><tspan y="323.5" x="1418.19" textLength="38.62" lengthAdjust="spacingAndGlyphs">16.00</tspan></text>
<text y="427.3" style="font-size:15.3px;fill:#b6b6b6;stroke:#b6b6b6;stroke-width:0.15px"><tspan y="427.3" x="1419.40" textLength="28.89" lengthAdjust="spacingAndGlyphs">8.00</tspan></text>
<text y="479.1" style="font-size:15.3px;fill:#b6b6b6;stroke:#b6b6b6;stroke-width:0.15px"><tspan y="479.1" x="1419.40" textLength="28.89" lengthAdjust="spacingAndGlyphs">4.00</tspan></text>
<text y="567.2" style="font-size:15.3px;fill:#b6b6b6;stroke:#b6b6b6;stroke-width:0.15px"><tspan y="567.2" x="1419.20" textLength="37.60" lengthAdjust="spacingAndGlyphs">80.00</tspan></text>
<text y="619.0" style="font-size:15.3px;fill:#b6b6b6;stroke:#b6b6b6;stroke-width:0.15px"><tspan y="619.0" x="1419.20" textLength="37.60" lengthAdjust="spacingAndGlyphs">60.00</tspan></text>
<text y="670.7" style="font-size:15.3px;fill:#b6b6b6;stroke:#b6b6b6;stroke-width:0.15px"><tspan y="670.7" x="1419.20" textLength="37.60" lengthAdjust="spacingAndGlyphs">40.00</tspan></text>
<text y="722.6" style="font-size:15.3px;fill:#b6b6b6;stroke:#b6b6b6;stroke-width:0.15px"><tspan y="722.6" x="1419.20" textLength="37.60" lengthAdjust="spacingAndGlyphs">20.00</tspan></text>
<text y="60" style="font-size:15.3px;fill:#d2d2d2;stroke:#d2d2d2;stroke-width:0.3px"><tspan y="60" x="1423.64" textLength="35.86" lengthAdjust="spacingAndGlyphs">USDT</tspan></text>
<text y="746.8" style="font-size:15.3px;fill:#b6b6b6;stroke:#b6b6b6;stroke-width:0.15px"><tspan y="746.8" x="16.70" textLength="24.86" lengthAdjust="spacingAndGlyphs">Aug</tspan></text>
<text y="746.8" style="font-size:15.3px;fill:#b6b6b6;stroke:#b6b6b6;stroke-width:0.15px"><tspan y="746.8" x="122.60" textLength="23.84" lengthAdjust="spacingAndGlyphs">Sep</tspan></text>
<text y="746.8" style="font-size:15.3px;fill:#b6b6b6;stroke:#b6b6b6;stroke-width:0.15px"><tspan y="746.8" x="224.80" textLength="22.78" lengthAdjust="spacingAndGlyphs">Oct</tspan></text>
<text y="746.8" style="font-size:15.3px;fill:#b6b6b6;stroke:#b6b6b6;stroke-width:0.15px"><tspan y="746.8" x="328.87" textLength="25.20" lengthAdjust="spacingAndGlyphs">Nov</tspan></text>
<text y="746.8" style="font-size:15.3px;fill:#b6b6b6;stroke:#b6b6b6;stroke-width:0.15px"><tspan y="746.8" x="431.08" textLength="25.00" lengthAdjust="spacingAndGlyphs">Dec</tspan></text>
<text y="746.8" style="font-size:15.3px;fill:#b6b6b6;stroke:#b6b6b6;stroke-width:0.15px"><tspan y="746.8" x="642.25" textLength="24.93" lengthAdjust="spacingAndGlyphs">Feb</tspan></text>
<text y="746.8" style="font-size:15.3px;fill:#b6b6b6;stroke:#b6b6b6;stroke-width:0.15px"><tspan y="746.8" x="737.13" textLength="25.46" lengthAdjust="spacingAndGlyphs">Mar</tspan></text>
<text y="746.8" style="font-size:15.3px;fill:#b6b6b6;stroke:#b6b6b6;stroke-width:0.15px"><tspan y="746.8" x="843.90" textLength="23.29" lengthAdjust="spacingAndGlyphs">Apr</tspan></text>
<text y="746.8" style="font-size:15.3px;fill:#b6b6b6;stroke:#b6b6b6;stroke-width:0.15px"><tspan y="746.8" x="943.57" textLength="26.90" lengthAdjust="spacingAndGlyphs">May</tspan></text>
<text y="746.8" style="font-size:15.3px;fill:#b6b6b6;stroke:#b6b6b6;stroke-width:0.15px"><tspan y="746.8" x="1051.60" textLength="23.69" lengthAdjust="spacingAndGlyphs">Jun</tspan></text>
<text y="746.8" style="font-size:15.3px;fill:#b6b6b6;stroke:#b6b6b6;stroke-width:0.15px"><tspan y="746.8" x="1155.40" textLength="20.01" lengthAdjust="spacingAndGlyphs">Jul</tspan></text>
<text y="746.8" style="font-size:15.3px;fill:#b6b6b6;stroke:#b6b6b6;stroke-width:0.15px"><tspan y="746.8" x="1258.60" textLength="24.86" lengthAdjust="spacingAndGlyphs">Aug</tspan></text>
<text y="746.8" style="font-size:15.3px;fill:#b6b6b6;stroke:#b6b6b6;stroke-width:0.15px"><tspan y="746.8" x="1364.40" textLength="23.95" lengthAdjust="spacingAndGlyphs">Sep</tspan></text>
<text y="746.8" style="font-size:15.3px;fill:#cccccc;stroke:#cccccc;stroke-width:0px;font-weight:bold"><tspan y="746.8" x="532.60" textLength="33.51" lengthAdjust="spacingAndGlyphs">2025</tspan></text>
<text y="786.8" style="font-size:15.8px;fill:#dcdcdc;stroke:#dcdcdc;stroke-width:0.3px"><tspan y="786.8" x="41.90" textLength="87.21" lengthAdjust="spacingAndGlyphs">TradingView</tspan></text>
<text y="380" style="font-size:15.3px;fill:#ffffff;stroke:#ffffff;stroke-width:0.3px"><tspan y="380" x="1419.88" textLength="37.94" lengthAdjust="spacingAndGlyphs">11.65</tspan></text>
<text y="398" style="font-size:15.3px;fill:#c2e8e1;stroke:#c2e8e1;stroke-width:0.3px"><tspan y="398" x="1420.10" textLength="58.90" lengthAdjust="spacingAndGlyphs">21:45:19</tspan></text>
<text y="529" style="font-size:15.3px;fill:#ffffff;stroke:#ffffff;stroke-width:0.3px"><tspan y="529" x="1420.10" textLength="46.20" lengthAdjust="spacingAndGlyphs">269.38</tspan> <tspan y="529" x="1466.92" textLength="8.98" lengthAdjust="spacingAndGlyphs">K</tspan></text>
<text y="693" style="font-size:15.3px;fill:#ffffff;stroke:#ffffff;stroke-width:0.3px"><tspan y="693" x="1420.10" textLength="36.73" lengthAdjust="spacingAndGlyphs">31.54</tspan></text>
</svg>
</body>
</html>
